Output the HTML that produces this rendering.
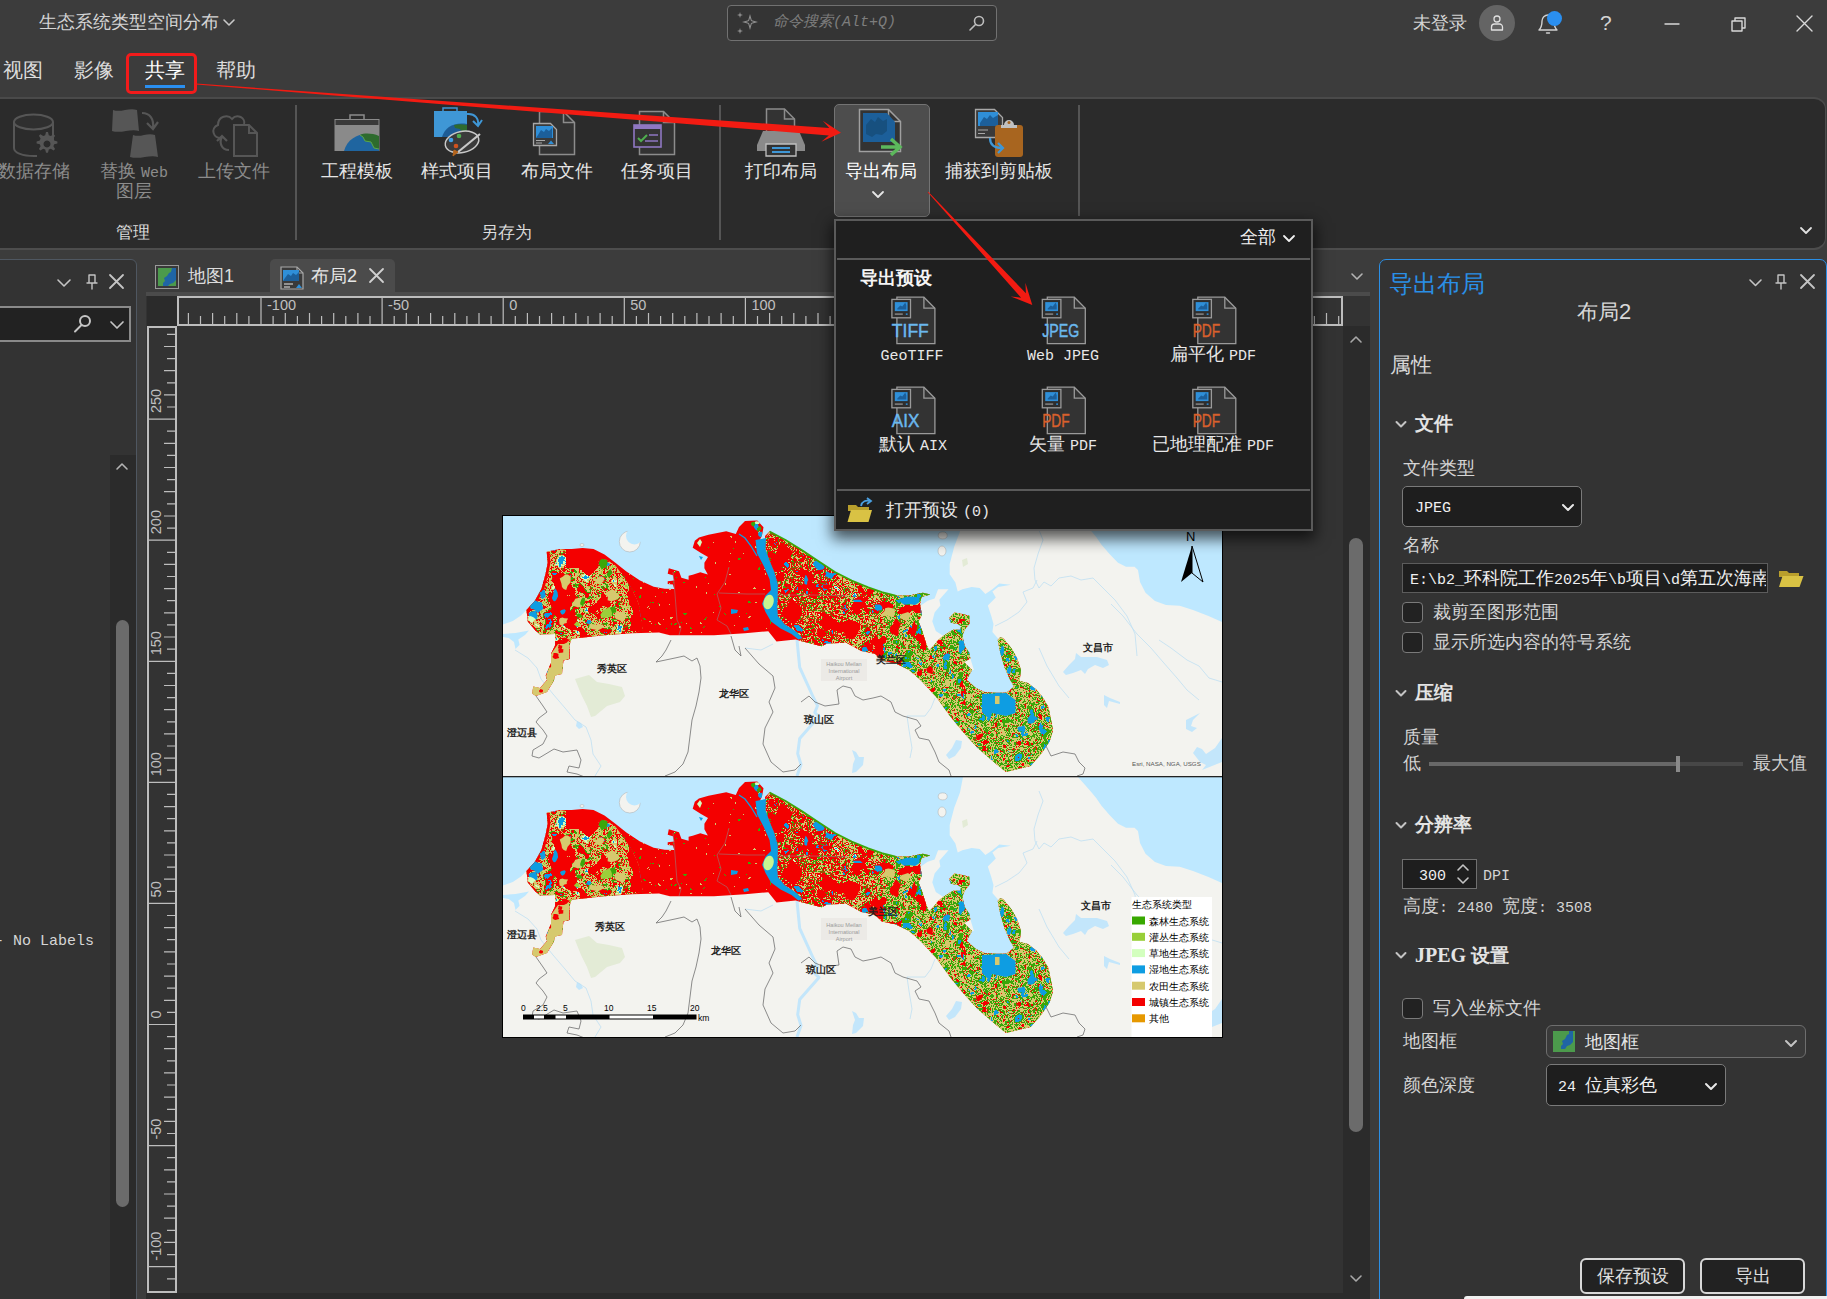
<!DOCTYPE html>
<html><head><meta charset="utf-8"><title>ArcGIS Pro</title>
<style>
*{box-sizing:border-box;margin:0;padding:0}
html,body{width:1827px;height:1299px;overflow:hidden;background:#3c3c3c}
body{position:relative;font-family:"Liberation Sans",sans-serif;color:#e6e6e6;font-size:17.7px;line-height:1}
.a{position:absolute}
.t{position:absolute;white-space:nowrap;line-height:20px;height:20px}
.m{font-family:"Liberation Mono",monospace;font-size:15px}
.c{text-align:center}
.dis{color:#8c8c8c}
.b{font-weight:bold}
svg{position:absolute;overflow:visible}
.ic{fill:none;stroke:#c8c8c8;stroke-width:1.6;stroke-linecap:round;stroke-linejoin:round}
</style></head>
<body>
<!-- ===== title bar ===== -->
<div class="a" style="left:0;top:0;width:1827px;height:97px;background:#3c3c3c"></div>
<div class="t" style="left:39px;top:12px;color:#d4d4d4">生态系统类型空间分布</div>
<svg class="ic" style="left:222px;top:17px" width="14" height="12"><path d="M2 3l5 5 5-5"/></svg>
<!-- search -->
<div class="a" style="left:727px;top:5px;width:270px;height:36px;border:1px solid #717171;border-radius:4px;background:#343434"></div>
<div class="t m" style="left:773px;top:13px;color:#7d7d7d;font-style:italic;font-size:15px">命令搜索(Alt+Q)</div>
<svg style="left:735px;top:10px" width="26" height="26" fill="#8f8f8f"><path d="M15 4l1.8 6.2L23 12l-6.2 1.8L15 20l-1.8-6.2L7 12l6.2-1.8zM15 8l-1 3-3 1 3 1 1 3 1-3 3-1-3-1z" fill-rule="evenodd"/><path d="M5 2l.7 2.3L8 5l-2.3.7L5 8l-.7-2.3L2 5l2.300-.7zM5 18l.7 2.300L8 21l-2.300.7L5 24l-.7-2.300L2 21l2.300-.7z"/></svg>
<svg class="ic" style="left:968px;top:14px;stroke:#bdbdbd" width="18" height="18"><circle cx="11" cy="7" r="4.500"/><path d="M7.500 10.500L2 16"/></svg>
<!-- right controls -->
<div class="t" style="left:1413px;top:13px;color:#d4d4d4">未登录</div>
<div class="a" style="left:1479px;top:5px;width:36px;height:36px;border-radius:18px;background:#646464"></div>
<svg class="ic" style="left:1487px;top:13px;stroke:#e0e0e0;stroke-width:1.3" width="20" height="20"><circle cx="10" cy="6" r="3"/><path d="M4.500 17v-3a3 3 0 0 1 3-3h5a3 3 0 0 1 3 3v3z"/></svg>
<svg class="ic" style="left:1536px;top:9px;stroke:#d0d0d0;stroke-width:1.4" width="28" height="28"><path d="M3 21h18c-2-2-3-4-3-9a6 6 0 0 0-12 0c0 5-1 7-3 9z"/><path d="M10.500 24h3"/></svg>
<div class="a" style="left:1547px;top:11px;width:15px;height:15px;border-radius:8px;background:#2a8ff0"></div>
<div class="t" style="left:1600px;top:13px;color:#d4d4d4;font-size:21px">?</div>
<svg class="ic" style="left:1662px;top:13px;stroke:#d8d8d8;stroke-width:1.400" width="160" height="22"><path d="M3 11h14"/><path d="M70 8h10v10h-10zM73 8v-3h10v10h-3"/><path d="M135 3l15 15M150 3l-15 15"/></svg>
<!-- tabs row -->
<div class="t" style="left:3px;top:60px;font-size:20px;color:#dcdcdc">视图</div>
<div class="t" style="left:74px;top:60px;font-size:20px;color:#dcdcdc">影像</div>
<div class="t" style="left:145px;top:60px;font-size:20px;color:#ffffff">共享</div>
<div class="t" style="left:216px;top:60px;font-size:20px;color:#dcdcdc">帮助</div>
<div class="a" style="left:145px;top:85px;width:40px;height:3px;background:#2a8ff0"></div>
<div class="a" style="left:126px;top:53px;width:71px;height:41px;border:3px solid #f21b1b;border-radius:5px"></div>
<!-- ===== ribbon ===== -->
<div class="a" style="left:-12px;top:97px;width:1838px;height:153px;background:#2b2b2b;border:1px solid #4d4d4d;border-top:2px solid #4a4a4a;border-bottom:2px solid #4d4d4d;border-radius:0 12px 12px 0"></div>
<!-- group separators -->
<div class="a" style="left:295px;top:105px;width:2px;height:135px;background:#555"></div>
<div class="a" style="left:719px;top:105px;width:2px;height:135px;background:#555"></div>
<div class="a" style="left:1078px;top:105px;width:2px;height:111px;background:#555"></div>
<!-- disabled group -->
<svg style="left:0;top:105px" width="290" height="56" fill="none" stroke="#565656" stroke-width="2">
<path d="M14 17v26c0 5 9 8 20 8h3M53 17v18" /><ellipse cx="33.500" cy="17" rx="19.500" ry="7.500" fill="#2f2f2f"/>
<g stroke="none" fill="#565656"><path d="M46 27l2 0 .8 3.200 2 .8 2.800-1.700 1.500 1.500-1.700 2.800.8 2 3.200.8v2l-3.200.8-.8 2 1.700 2.800-1.500 1.500-2.800-1.700-2 .8-.8 3.200h-2l-.8-3.200-2-.8-2.800 1.700-1.500-1.500 1.700-2.800-.8-2-3.200-.8v-2l3.200-.8.8-2-1.700-2.800 1.500-1.500 2.800 1.700 2-.8zM47 35.500a3.500 3.500 0 1 0 .01 0z" fill-rule="evenodd"/></g>
<path d="M113 5c8 3 16-3 24 0l2 21c-8-3-18 3-27 0z" fill="#565656" stroke="none"/>
<path d="M133 30c8 3 14-3 22 0l3 22c-8-3-18 3-28 0z" fill="#565656" stroke="none"/>
<path d="M142 8c8 0 12 6 11 15M147 18l6 6 5-7" stroke-width="2.200"/>
<path d="M222 33c-9 1-12-10-4-13 0-9 10-11 14-6 5-6 14-1 12 5" /><path d="M229 45c-8 0-10-8-7-13M217 36l5-5 5 5" stroke-width="2.200"/>
<path d="M234 20h15l8 8v23h-23z" fill="#2f2f2f"/><path d="M249 20v8h8"/>
</svg>
<div class="t c dis" style="left:-3px;top:161px;width:74px">数据存储</div>
<div class="t c dis" style="left:84px;top:161px;width:100px">替换 <span class="m">Web</span></div>
<div class="t c dis" style="left:84px;top:181px;width:100px">图层</div>
<div class="t c dis" style="left:197px;top:161px;width:74px">上传文件</div>
<div class="t c" style="left:103px;top:222px;width:60px;font-size:16.500px;color:#dcdcdc">管理</div>
<!-- save-as group -->
<svg style="left:330px;top:105px" width="360" height="56">
<!-- briefcase -->
<path d="M20 14v-4h14v4" fill="none" stroke="#8c8c8c" stroke-width="1.500"/><rect x="4.500" y="14" width="45" height="32" fill="#8a8a8a"/><rect x="5.500" y="15" width="43" height="5" fill="#3a3a3a"/>
<path d="M14 46c3-12 14-18 26-17l9 3v14z" fill="#1f65a0"/><path d="M30 30c4-2 12-2 19 1v13l-5-1-3-6-6-1-2-4z" fill="#2e6b2e"/><path d="M30 30l3 2 2 4 6 1 3 6 5 1" fill="none" stroke="#5aa84a" stroke-width="1"/>
<!-- style -->
<path d="M113 6v-3h14v3" fill="none" stroke="#3f97d6" stroke-width="1.500"/><rect x="104" y="6" width="33" height="26" fill="#3f97d6"/><path d="M112 32c3-10 12-15 25-13v13z" fill="#1d5c96"/><path d="M124 20c4-1 9-1 13 0v10l-4-1-3-5-5-1z" fill="#2e6b2e"/>
<path d="M137 9c8-1 12 5 11 11M143 16l5 5 4-6" fill="none" stroke="#3f97d6" stroke-width="2"/>
<ellipse cx="132" cy="37" rx="17" ry="10.500" fill="#3a3a3a" stroke="#c8c8c8" stroke-width="1.500" transform="rotate(-12 132 37)"/>
<circle cx="121" cy="35" r="2.300" fill="#3fa0e8"/><circle cx="129" cy="31" r="2.300" fill="#4fae4f"/><circle cx="126" cy="41" r="2.300" fill="#d0521e"/>
<path d="M150 29l-22 18" stroke="#c8c8c8" stroke-width="2.200"/><path d="M128 47l-5 4 1-6z" fill="#b5651d" stroke="#b5651d"/>
<!-- layout file -->
<path d="M209.500 6.500h24l11 11v32h-35z" fill="#333" stroke="#8c8c8c" stroke-width="1.500"/><path d="M233.500 6.500v11h11" fill="none" stroke="#8c8c8c" stroke-width="1.500"/>
<path d="M203.500 18.500h17l6 6v16h-23z" fill="#3a3a3a" stroke="#a8a8a8" stroke-width="1.300"/><rect x="206" y="21" width="17" height="12" fill="#2f8fd8"/><path d="M208 30l3-5 3 2 2-3 3 2 3-3v10h-16z" fill="#1c5f9a"/><path d="M206 35.500h9M206 38h6" stroke="#a8a8a8" stroke-width="1.200"/><path d="M218 39l3-3.500 3 3.500z" fill="#2f8fd8"/>
<!-- task item -->
<path d="M309.500 6.500h24l11 11v32h-35z" fill="#333" stroke="#8c8c8c" stroke-width="1.500"/><path d="M333.500 6.500v11h11" fill="none" stroke="#8c8c8c" stroke-width="1.500"/>
<rect x="304" y="20" width="27" height="22" fill="#333" stroke="#8f77c2" stroke-width="1.600"/><rect x="304" y="20" width="27" height="4" fill="#8f77c2"/><path d="M308 33l3 3 6-6" fill="none" stroke="#4fae4f" stroke-width="2"/><path d="M319 30h9M315 36h13" stroke="#8f77c2" stroke-width="1.500"/>
</svg>
<div class="t c" style="left:317px;top:161px;width:80px">工程模板</div>
<div class="t c" style="left:417px;top:161px;width:80px">样式项目</div>
<div class="t c" style="left:517px;top:161px;width:80px">布局文件</div>
<div class="t c" style="left:617px;top:161px;width:80px">任务项目</div>
<div class="t c" style="left:466px;top:222px;width:80px;font-size:16.500px;color:#dcdcdc">另存为</div>
<!-- print / export group -->
<div class="a" style="left:834px;top:104px;width:96px;height:113px;background:#4d4d4d;border:1px solid #737373;border-radius:5px"></div>
<svg style="left:750px;top:105px" width="280" height="56">
<!-- printer -->
<path d="M16.500 28v-24h18l10 10v14" fill="#333" stroke="#8c8c8c" stroke-width="1.500"/><path d="M34.500 4v10h10" fill="none" stroke="#8c8c8c" stroke-width="1.500"/>
<path d="M7 40l6-14h36l6 14v6h-48z" fill="#8a8a8a"/><path d="M16 39h30v12h-30z" fill="#333" stroke="#c0c0c0" stroke-width="1.300"/><path d="M22 43h18M22 47h18" stroke="#3f97d6" stroke-width="1.800"/>
<!-- export layout -->
<path d="M109.500 4.500h29l12 12v30h-41z" fill="#333" stroke="#a0a0a0" stroke-width="1.500"/><path d="M138.500 4.500v12h12" fill="none" stroke="#a0a0a0" stroke-width="1.500"/>
<path d="M113 8h24l8 9v20h-32z" fill="#1c5f9a"/><path d="M116 20l5-6 4 3 3-5 5 4 4-2v12l-5 4-6-1-4 3-6-3z" fill="#17507f"/>
<path d="M131 42h17M141 34l9 8-9 8" fill="none" stroke="#5cb85c" stroke-width="3.500"/>
<!-- capture -->
<path d="M225.500 4.500h19l8 8v20h-27z" fill="#3a3a3a" stroke="#a8a8a8" stroke-width="1.300"/><rect x="228" y="7" width="20" height="14" fill="#2f8fd8"/><path d="M230 18l4-6 3 2 3-4 3 3 5-3v11h-18z" fill="#1c5f9a"/><path d="M228 25h10M228 28.500h7" stroke="#a8a8a8" stroke-width="1.200"/>
<rect x="245" y="20" width="28" height="32" rx="3" fill="#a8651f"/><path d="M254 20a5 5 0 0 1 10 0h3v3h-16v-3z" fill="#c0c0c0"/><circle cx="259" cy="17.500" r="1.500" fill="#a8651f"/>
<path d="M240 33c0 8 6 10 12 10M248 38l5 5-5 5" fill="none" stroke="#3f97d6" stroke-width="2.200"/>
</svg>
<div class="t c" style="left:741px;top:161px;width:80px">打印布局</div>
<div class="t c" style="left:841px;top:161px;width:80px;color:#fff">导出布局</div>
<svg class="ic" style="left:870px;top:188px;stroke:#e6e6e6;stroke-width:1.800" width="16" height="14"><path d="M3 4l5 5 5-5"/></svg>
<div class="t c" style="left:939px;top:161px;width:120px">捕获到剪贴板</div>
<svg class="ic" style="left:1798px;top:224px;stroke:#e0e0e0;stroke-width:1.800" width="16" height="14"><path d="M3 4l5 5 5-5"/></svg>

<!-- ===== left panel ===== -->
<div class="a" style="left:-6px;top:259px;width:143px;height:1050px;background:#333333;border:1px solid #4f5761;border-radius:6px"></div>
<svg class="ic" style="left:54px;top:272px;stroke:#c4c4c4" width="80" height="20"><path d="M4 8l6 6 6-6"/><path d="M35 3h6v8h-6zM33 11h10M38 11v6" stroke-width="1.400"/><path d="M56 3l13 13M69 3L56 16" stroke-width="1.800"/></svg>
<div class="a" style="left:-4px;top:306px;width:135px;height:36px;background:#222222;border:2px solid #8a8a8a"></div>
<svg class="ic" style="left:72px;top:312px;stroke:#c4c4c4;stroke-width:2" width="56" height="24"><circle cx="13" cy="9" r="5"/><path d="M9.500 13L3 19.500"/><path d="M39 10l6 6 6-6" stroke-width="1.700"/></svg>
<div class="a" style="left:110px;top:455px;width:26px;height:844px;background:#2b2b2b"></div>
<svg class="ic" style="left:114px;top:460px;stroke:#b4b4b4" width="16" height="14"><path d="M3 9l5-5 5 5"/></svg>
<div class="a" style="left:116px;top:620px;width:13px;height:587px;border-radius:7px;background:#6b6b6b"></div>
<div class="t m" style="left:-5px;top:932px;color:#d6d6d6">- No Labels</div>
<!-- ===== view ===== -->
<div class="a" style="left:146px;top:292px;width:1224px;height:1001px;background:#333333"></div>
<div class="a" style="left:146px;top:292px;width:1224px;height:4px;background:#4b4b4b"></div>
<div class="a" style="left:146px;top:1293px;width:1224px;height:6px;background:#2b2b2b"></div>
<!-- doc tabs -->
<svg style="left:155px;top:265px" width="24" height="24"><rect x="0.500" y="0.500" width="23" height="23" fill="#3a3a3a" stroke="#9a9a9a"/><rect x="3" y="3" width="18" height="18" fill="#4c9a4c"/><path d="M17 3h4v12l-3 3-3 1-2 2H8l0-3 2-2-1-3 3-2 2-3 2-1z" fill="#1f65a5"/></svg>
<div class="t" style="left:188px;top:266px;color:#dcdcdc">地图<span style="font-size:18px">1</span></div>
<div class="a" style="left:270px;top:259px;width:125px;height:33px;background:#4b4b4b;border-radius:5px 5px 0 0"></div>
<svg style="left:280px;top:264px" width="26" height="26"><path d="M1 3h16l6 6v16H1z" fill="#3a3a3a" stroke="#a8a8a8" stroke-width="1.200"/><path d="M17 3v6h6" fill="none" stroke="#a8a8a8" stroke-width="1.200"/><rect x="3" y="6" width="16" height="11" fill="#2f8fd8"/><path d="M5 14l3-4 3 2 2-3 3 2 3-3v9H3z" fill="#1c5f9a"/><path d="M4 20h9M4 23h6" stroke="#b0b0b0" stroke-width="1.300"/><path d="M16 24l3-4 3 4z" fill="#2f8fd8"/></svg>
<div class="t" style="left:311px;top:266px;color:#e6e6e6">布局<span style="font-size:18px">2</span></div>
<svg class="ic" style="left:368px;top:267px;stroke:#d0d0d0;stroke-width:1.800" width="18" height="18"><path d="M2 2l13 13M15 2L2 15"/></svg>
<svg class="ic" style="left:1349px;top:270px;stroke:#b4b4b4" width="16" height="14"><path d="M3 4l5 5 5-5"/></svg>
<div class="a" style="left:147px;top:296px;width:30px;height:30px;background:#2b2b2b"></div><svg style="left:177px;top:296px" width="1166" height="30"><rect x="1" y="1" width="1164" height="28" fill="#333" stroke="#bdbdbd" stroke-width="2"/><g stroke="#bdbdbd" stroke-width="1.200"><path d="M11.4 17V29M23.5 20V29M35.6 17V29M47.7 20V29M59.8 17V29M71.9 20V29M84.0 1V29M96.1 20V29M108.3 17V29M120.4 20V29M132.5 17V29M144.6 20V29M156.7 17V29M168.8 20V29M180.9 17V29M193.0 20V29M205.1 1V29M217.2 20V29M229.3 17V29M241.4 20V29M253.6 17V29M265.7 20V29M277.8 17V29M289.9 20V29M302.0 17V29M314.1 20V29M326.2 1V29M338.3 20V29M350.4 17V29M362.5 20V29M374.6 17V29M386.7 20V29M398.8 17V29M411.0 20V29M423.1 17V29M435.2 20V29M447.3 1V29M459.4 20V29M471.5 17V29M483.6 20V29M495.7 17V29M507.8 20V29M519.9 17V29M532.0 20V29M544.1 17V29M556.3 20V29M568.4 1V29M580.5 20V29M592.6 17V29M604.7 20V29M616.8 17V29M628.9 20V29M641.0 17V29M653.1 20V29M665.2 17V29M677.3 20V29M689.4 1V29M701.5 20V29M713.7 17V29M725.8 20V29M737.9 17V29M750.0 20V29M762.1 17V29M774.2 20V29M786.3 17V29M798.4 20V29M810.5 1V29M822.6 20V29M834.7 17V29M846.8 20V29M859.0 17V29M871.1 20V29M883.2 17V29M895.3 20V29M907.4 17V29M919.5 20V29M931.6 1V29M943.7 20V29M955.8 17V29M967.9 20V29M980.0 17V29M992.1 20V29M1004.2 17V29M1016.4 20V29M1028.5 17V29M1040.6 20V29M1052.7 1V29M1064.8 20V29M1076.9 17V29M1089.0 20V29M1101.1 17V29M1113.2 20V29M1125.3 17V29M1137.4 20V29M1149.5 17V29M1161.7 20V29"/></g><g font-family="Liberation Sans,sans-serif" font-size="14.500" fill="#c0c0c0"><text x="90.0" y="14">-100</text><text x="211.1" y="14">-50</text><text x="332.2" y="14">0</text><text x="453.3" y="14">50</text><text x="574.4" y="14">100</text><text x="695.4" y="14">150</text><text x="816.5" y="14">200</text><text x="937.6" y="14">250</text><text x="1058.7" y="14">300</text></g></svg><svg style="left:147px;top:326px" width="30" height="967"><rect x="1" y="1" width="28" height="965" fill="#333" stroke="#bdbdbd" stroke-width="2"/><g stroke="#bdbdbd" stroke-width="1.200"><path d="M20 952.8H29M1 940.7H29M20 928.6H29M17 916.4H29M20 904.3H29M17 892.2H29M20 880.1H29M17 868.0H29M20 855.9H29M17 843.8H29M20 831.7H29M1 819.6H29M20 807.5H29M17 795.4H29M20 783.3H29M17 771.1H29M20 759.0H29M17 746.9H29M20 734.8H29M17 722.7H29M20 710.6H29M1 698.5H29M20 686.4H29M17 674.3H29M20 662.2H29M17 650.1H29M20 638.0H29M17 625.9H29M20 613.7H29M17 601.6H29M20 589.5H29M1 577.4H29M20 565.3H29M17 553.2H29M20 541.1H29M17 529.0H29M20 516.9H29M17 504.8H29M20 492.7H29M17 480.6H29M20 468.4H29M1 456.3H29M20 444.2H29M17 432.1H29M20 420.0H29M17 407.9H29M20 395.8H29M17 383.7H29M20 371.6H29M17 359.5H29M20 347.4H29M1 335.3H29M20 323.2H29M17 311.0H29M20 298.9H29M17 286.8H29M20 274.7H29M17 262.6H29M20 250.5H29M17 238.4H29M20 226.3H29M1 214.2H29M20 202.1H29M17 190.0H29M20 177.9H29M17 165.7H29M20 153.6H29M17 141.5H29M20 129.4H29M17 117.3H29M20 105.2H29M1 93.1H29M20 81.0H29M17 68.9H29M20 56.8H29M17 44.7H29M20 32.6H29M17 20.5H29M20 8.3H29"/></g><g font-family="Liberation Sans,sans-serif" font-size="14.500" fill="#c0c0c0"><text transform="translate(14,934.7) rotate(-90)">-100</text><text transform="translate(14,813.6) rotate(-90)">-50</text><text transform="translate(14,692.5) rotate(-90)">0</text><text transform="translate(14,571.4) rotate(-90)">50</text><text transform="translate(14,450.3) rotate(-90)">100</text><text transform="translate(14,329.3) rotate(-90)">150</text><text transform="translate(14,208.2) rotate(-90)">200</text><text transform="translate(14,87.1) rotate(-90)">250</text></g></svg>
<!-- view scrollbar -->
<div class="a" style="left:1343px;top:326px;width:27px;height:967px;background:#2b2b2b"></div>
<svg class="ic" style="left:1348px;top:333px;stroke:#a8a8a8" width="16" height="14"><path d="M3 9l5-5 5 5"/></svg>
<svg class="ic" style="left:1348px;top:1272px;stroke:#a8a8a8" width="16" height="14"><path d="M3 4l5 5 5-5"/></svg>
<div class="a" style="left:1349px;top:538px;width:14px;height:594px;border-radius:7px;background:#6b6b6b"></div>
<!-- ===== page / map ===== -->
<div class="a" style="left:502px;top:515px;width:721px;height:523px;background:#000"></div>
<svg style="left:503px;top:516px" width="719" height="521" viewBox="0 0 719 521"><defs><clipPath id="mc"><rect width="719" height="260"/></clipPath><g id="mp" clip-path="url(#mc)"><rect width="719" height="260" fill="#f3f3ef"/><polygon points="575.0,0.0 587.8,14.6 593.0,20.7 598.7,29.0 607.0,38.5 615.0,46.7 623.0,50.8 631.6,50.8 635.0,54.0 637.0,66.0 642.5,76.8 652.0,85.0 663.0,89.0 676.7,89.8 690.0,94.0 705.5,100.0 719.0,106.0 719.0,0.0" fill="#bee8ff"/><polygon points="0.0,0.0 460.0,0.0 457.0,15.5 451.3,30.6 446.7,47.9 446.7,58.3 452.4,66.4 454.7,75.6 459.4,73.3 468.6,71.0 476.7,72.0 482.4,77.9 489.4,73.3 496.3,67.5 507.9,68.7 495.2,71.0 489.4,75.6 492.8,81.4 484.8,89.5 488.2,99.8 490.5,108.0 489.4,116.0 496.3,124.0 497.5,137.7 501.6,151.4 507.0,163.7 511.0,170.5 505.0,177.0 492.0,177.0 481.5,176.5 473.0,172.0 463.7,163.7 469.0,154.0 470.9,154.0 467.4,142.6 466.3,136.8 461.7,129.9 459.4,119.5 461.7,113.7 466.3,107.9 466.3,99.8 459.4,98.1 451.3,96.4 446.1,102.2 447.8,106.8 454.7,107.9 458.2,110.2 457.0,113.7 450.1,113.7 445.5,116.6 439.7,119.5 432.8,114.9 429.3,105.6 431.6,96.4 437.4,89.5 436.3,83.7 445.5,73.3 435.1,73.3 431.6,82.5 424.7,84.8 417.8,89.5 418.9,82.5 427.6,78.5 400.0,100.0 60.0,100.0 30.0,95.0 23.5,94.0 18.0,99.4 9.8,104.9 0.0,108.5" fill="#bee8ff"/><polygon points="0.0,118.0 12.5,117.0 26.0,114.5 22.0,119.0 15.3,123.4 16.6,128.8 12.5,133.0 11.0,126.0 5.7,122.0 0.0,121.0" fill="#bee8ff"/><circle cx="126.800" cy="25.500" r="10.500" fill="#f3f3ef" stroke="#aaa" stroke-width=".5"/><circle cx="131.500" cy="20" r="8.500" fill="#bee8ff"/><ellipse cx="439.700" cy="19.400" rx="4.500" ry="3.500" fill="#f3f3ef" stroke="#aaa" stroke-width=".5"/><ellipse cx="439" cy="35" rx="4" ry="5" fill="#f3f3ef" stroke="#aaa" stroke-width=".5"/><ellipse cx="79" cy="29" rx="2" ry="1.500" fill="#f3f3ef" stroke="#aaa" stroke-width=".5"/><g fill="#c3e6fb"><polygon points="573,137 578,141 594,141 604,144 606,149 600,152 592,149 585,153 582,158 578,154 570,157 563,159 560,156 566,149 572,143"/><polygon points="601,179 607,182 617,186 617,188 606,185 604,192 601,189"/><polygon points="697,197 683,204 683,213 689,216 694,212 688,210 690,204"/><polygon points="719,222 712,232 703,238 699,233 694,231 690,237 697,246 703,249 699,254 709,250 719,246"/><polygon points="453,224 459,225 458,232 452,240 446,243 443,239 449,232"/><polygon points="349,234 353,236 356,241 361,241 360,249 353,256 349,257 350,248 352,243"/><polygon points="74,205 78,207 80,211 76,213 73,210"/></g><g fill="none" stroke="#c3e6fb" stroke-width="3" stroke-linejoin="round"><polyline points="294,124 296.7,151.4 310.4,181.5 314.5,189.700 311.800,196.500 316,200.600 306.300,211.600 296.700,222.500 294.700,237.600 298,248.500 294,260"/></g><g fill="none" stroke="#bfe0f2" stroke-width=".8"><polyline points="12,134 25,142 34,152 38,163 50,178 62,192 72,204 83,211 88,224 90,238 98,250 92,260"/><polyline points="242,132 258,134 270,128"/><polyline points="404,200 406,214 409,232 407,242"/><polyline points="404,200 422,200 428,192 432,182"/><polyline points="536,14 540,24 535,38 531,52 532,64 536,72 541,66 548,70 556,62 568,60 578,64 590,62 600,72 612,84 624,100 632,118 634,140"/><polyline points="608,88 620,100 634,118 648,132 660,146 674,162 684,174 696,184"/><polyline points="492,110 504,104 516,96 524,86 520,76 530,72 534,64"/><polyline points="656,124 668,132 684,144 696,150 706,162 719,166"/><polyline points="536,132 544,150 556,170 566,182"/></g><polygon points="72,163 86,159 94,166 106,168 119,171 122,180 117,186 104,190 92,200 88,201 84,190 78,178" fill="#e3ebd6"/><polygon points="459,44 464,42 465,48 460,51" fill="#e3ebd6"/><g fill="none" stroke="#707070" stroke-width=".8" stroke-linejoin="round"><polyline points="168,124 163,134 159,140 153,146 172,142 181,140 189,145 194,142 197,150 198,162 196,176 193,190 189,204 187,220 185,236 180,248 172,256 162,260"/><polyline points="33,180 40,190 44,196 36,202 33,206 40,214 44,220 40,228 30,234 29,240 36,242 51,233 60,236 74,234 78,244 76,252 66,250 64,256 74,258 84,262"/><polyline points="242,132 256,148 270,160 272,172 266,186 270,196 262,212 260,228 268,246 280,256 292,254 298,248"/><polyline points="298,186 306,180 312,186 322,190 336,188 334,174 340,170 348,172 352,180 360,184 370,182 378,180 388,186 392,196 400,200 414,204 418,210 412,214 416,222 426,224 432,236 436,246 446,254 448,260"/><polyline points="542,228 548,240 560,236 572,238 576,246 582,252 580,258 574,260"/><polyline points="228,120 232,134 238,140 236,130"/></g><defs><filter id="fW" x="0" y="0" width="100%" height="100%" color-interpolation-filters="sRGB"><feTurbulence type="fractalNoise" baseFrequency="0.075" numOctaves="4" seed="4"/><feColorMatrix values="1 0 0 0 0 1 0 0 0 0 1 0 0 0 0 1 0 0 0 0"/><feComponentTransfer><feFuncR type="discrete" tableValues="0.055 0.055 0.055 0.055 0.055 0.055 0.055 0.055 0.055 0.055 0.055 0.055 0.000 0.000 0.000 0.000 0.000 0.227 0.227 0.839 0.839 0.839 0.000 0.608 0.839 0.839 0.000 0.000 0.839 0.839 0.227 0.000 0.000 0.839 0.839 0.839 0.827 0.827 0.055 0.055 0.055 0.055 0.055 0.055 0.055 0.055 0.055 0.055 0.055 0.055"/><feFuncG type="discrete" tableValues="0.616 0.616 0.616 0.616 0.616 0.616 0.616 0.616 0.616 0.616 0.616 0.616 0.000 0.000 0.000 0.000 0.000 0.655 0.655 0.788 0.788 0.788 0.000 0.812 0.788 0.788 0.000 0.000 0.788 0.788 0.655 0.000 0.000 0.788 0.788 0.788 1.000 1.000 0.616 0.616 0.616 0.616 0.616 0.616 0.616 0.616 0.616 0.616 0.616 0.616"/><feFuncB type="discrete" tableValues="0.886 0.886 0.886 0.886 0.886 0.886 0.886 0.886 0.886 0.886 0.886 0.886 0.000 0.000 0.000 0.000 0.000 0.039 0.039 0.431 0.431 0.431 0.000 0.227 0.431 0.431 0.000 0.000 0.431 0.431 0.039 0.000 0.000 0.431 0.431 0.431 0.745 0.745 0.886 0.886 0.886 0.886 0.886 0.886 0.886 0.886 0.886 0.886 0.886 0.886"/><feFuncA type="discrete" tableValues="1 1 1 1 1 1 1 1 1 1 1 1 0 0 0 0 0 1 1 1 1 1 0 1 1 1 0 0 1 1 1 0 0 1 1 1 1 1 1 1 1 1 1 1 1 1 1 1 1 1"/></feComponentTransfer></filter><filter id="fE1" x="0" y="0" width="100%" height="100%" color-interpolation-filters="sRGB"><feTurbulence type="fractalNoise" baseFrequency="0.075" numOctaves="4" seed="6"/><feColorMatrix values="1 0 0 0 0 1 0 0 0 0 1 0 0 0 0 1 0 0 0 0"/><feComponentTransfer><feFuncR type="discrete" tableValues="0.055 0.055 0.055 0.055 0.055 0.055 0.055 0.055 0.055 0.055 0.055 0.055 0.055 0.055 0.957 0.957 0.957 0.957 0.957 0.227 0.839 0.839 0.957 0.957 0.957 0.227 0.839 0.957 0.957 0.957 0.227 0.839 0.839 0.957 0.957 0.957 0.827 0.827 0.055 0.055 0.055 0.055 0.055 0.055 0.055 0.055 0.055 0.055 0.055 0.055"/><feFuncG type="discrete" tableValues="0.616 0.616 0.616 0.616 0.616 0.616 0.616 0.616 0.616 0.616 0.616 0.616 0.616 0.616 0.000 0.000 0.000 0.000 0.000 0.655 0.788 0.788 0.000 0.000 0.000 0.655 0.788 0.000 0.000 0.000 0.655 0.788 0.788 0.000 0.000 0.000 1.000 1.000 0.616 0.616 0.616 0.616 0.616 0.616 0.616 0.616 0.616 0.616 0.616 0.616"/><feFuncB type="discrete" tableValues="0.886 0.886 0.886 0.886 0.886 0.886 0.886 0.886 0.886 0.886 0.886 0.886 0.886 0.886 0.000 0.000 0.000 0.000 0.000 0.039 0.431 0.431 0.000 0.000 0.000 0.039 0.431 0.000 0.000 0.000 0.039 0.431 0.431 0.000 0.000 0.000 0.745 0.745 0.886 0.886 0.886 0.886 0.886 0.886 0.886 0.886 0.886 0.886 0.886 0.886"/><feFuncA type="discrete" tableValues="1 1 1 1 1 1 1 1 1 1 1 1 1 1 1 1 1 1 1 1 1 1 1 1 1 1 1 1 1 1 1 1 1 1 1 1 1 1 1 1 1 1 1 1 1 1 1 1 1 1"/></feComponentTransfer></filter><filter id="fE2" x="0" y="0" width="100%" height="100%" color-interpolation-filters="sRGB"><feTurbulence type="fractalNoise" baseFrequency="0.078" numOctaves="4" seed="6"/><feColorMatrix values="1 0 0 0 0 1 0 0 0 0 1 0 0 0 0 1 0 0 0 0"/><feComponentTransfer><feFuncR type="discrete" tableValues="0.055 0.055 0.055 0.055 0.055 0.055 0.055 0.055 0.055 0.055 0.055 0.055 0.055 0.055 0.957 0.957 0.957 0.957 0.227 0.227 0.839 0.839 0.957 0.957 0.227 0.839 0.839 0.957 0.957 0.227 0.839 0.839 0.839 0.608 0.957 0.957 0.827 0.827 0.055 0.055 0.055 0.055 0.055 0.055 0.055 0.055 0.055 0.055 0.055 0.055"/><feFuncG type="discrete" tableValues="0.616 0.616 0.616 0.616 0.616 0.616 0.616 0.616 0.616 0.616 0.616 0.616 0.616 0.616 0.000 0.000 0.000 0.000 0.655 0.655 0.788 0.788 0.000 0.000 0.655 0.788 0.788 0.000 0.000 0.655 0.788 0.788 0.788 0.812 0.000 0.000 1.000 1.000 0.616 0.616 0.616 0.616 0.616 0.616 0.616 0.616 0.616 0.616 0.616 0.616"/><feFuncB type="discrete" tableValues="0.886 0.886 0.886 0.886 0.886 0.886 0.886 0.886 0.886 0.886 0.886 0.886 0.886 0.886 0.000 0.000 0.000 0.000 0.039 0.039 0.431 0.431 0.000 0.000 0.039 0.431 0.431 0.000 0.000 0.039 0.431 0.431 0.431 0.227 0.000 0.000 0.745 0.745 0.886 0.886 0.886 0.886 0.886 0.886 0.886 0.886 0.886 0.886 0.886 0.886"/><feFuncA type="discrete" tableValues="1 1 1 1 1 1 1 1 1 1 1 1 1 1 1 1 1 1 1 1 1 1 1 1 1 1 1 1 1 1 1 1 1 1 1 1 1 1 1 1 1 1 1 1 1 1 1 1 1 1"/></feComponentTransfer></filter><filter id="fS" x="0" y="0" width="100%" height="100%" color-interpolation-filters="sRGB"><feTurbulence type="fractalNoise" baseFrequency="0.08" numOctaves="4" seed="9"/><feColorMatrix values="1 0 0 0 0 1 0 0 0 0 1 0 0 0 0 1 0 0 0 0"/><feComponentTransfer><feFuncR type="discrete" tableValues="0.055 0.055 0.055 0.055 0.055 0.055 0.055 0.055 0.055 0.055 0.055 0.055 0.055 0.227 0.227 0.227 0.227 0.227 0.839 0.839 0.839 0.957 0.227 0.227 0.839 0.839 0.227 0.227 0.839 0.839 0.839 0.957 0.227 0.227 0.227 0.839 0.839 0.055 0.055 0.055 0.055 0.055 0.055 0.055 0.055 0.055 0.055 0.055 0.055 0.055"/><feFuncG type="discrete" tableValues="0.616 0.616 0.616 0.616 0.616 0.616 0.616 0.616 0.616 0.616 0.616 0.616 0.616 0.655 0.655 0.655 0.655 0.655 0.788 0.788 0.788 0.000 0.655 0.655 0.788 0.788 0.655 0.655 0.788 0.788 0.788 0.000 0.655 0.655 0.655 0.788 0.788 0.616 0.616 0.616 0.616 0.616 0.616 0.616 0.616 0.616 0.616 0.616 0.616 0.616"/><feFuncB type="discrete" tableValues="0.886 0.886 0.886 0.886 0.886 0.886 0.886 0.886 0.886 0.886 0.886 0.886 0.886 0.039 0.039 0.039 0.039 0.039 0.431 0.431 0.431 0.000 0.039 0.039 0.431 0.431 0.039 0.039 0.431 0.431 0.431 0.000 0.039 0.039 0.039 0.431 0.431 0.886 0.886 0.886 0.886 0.886 0.886 0.886 0.886 0.886 0.886 0.886 0.886 0.886"/><feFuncA type="discrete" tableValues="1 1 1 1 1 1 1 1 1 1 1 1 1 1 1 1 1 1 1 1 1 1 1 1 1 1 1 1 1 1 1 1 1 1 1 1 1 1 1 1 1 1 1 1 1 1 1 1 1 1"/></feComponentTransfer></filter><filter id="fR" x="0" y="0" width="100%" height="100%" color-interpolation-filters="sRGB"><feTurbulence type="fractalNoise" baseFrequency="0.04" numOctaves="4" seed="12"/><feColorMatrix values="1 0 0 0 0 1 0 0 0 0 1 0 0 0 0 1 0 0 0 0"/><feComponentTransfer><feFuncR type="discrete" tableValues="0.957 0.957 0.957 0.957 0.957 0.957 0.957 0.957 0.957 0.957 0.957 0.957 0.957 0.957 0.957 0.957 0.957 0.957 0.957 0.957 0.957 0.957 0.000 0.000 0.000 0.000 0.000 0.000 0.000 0.000 0.000 0.000 0.000 0.000 0.000 0.000 0.000 0.000 0.000 0.000 0.000 0.000 0.000 0.000 0.000 0.000 0.000 0.000 0.000 0.000"/><feFuncG type="discrete" tableValues="0.000 0.000 0.000 0.000 0.000 0.000 0.000 0.000 0.000 0.000 0.000 0.000 0.000 0.000 0.000 0.000 0.000 0.000 0.000 0.000 0.000 0.000 0.000 0.000 0.000 0.000 0.000 0.000 0.000 0.000 0.000 0.000 0.000 0.000 0.000 0.000 0.000 0.000 0.000 0.000 0.000 0.000 0.000 0.000 0.000 0.000 0.000 0.000 0.000 0.000"/><feFuncB type="discrete" tableValues="0.000 0.000 0.000 0.000 0.000 0.000 0.000 0.000 0.000 0.000 0.000 0.000 0.000 0.000 0.000 0.000 0.000 0.000 0.000 0.000 0.000 0.000 0.000 0.000 0.000 0.000 0.000 0.000 0.000 0.000 0.000 0.000 0.000 0.000 0.000 0.000 0.000 0.000 0.000 0.000 0.000 0.000 0.000 0.000 0.000 0.000 0.000 0.000 0.000 0.000"/><feFuncA type="discrete" tableValues="1 1 1 1 1 1 1 1 1 1 1 1 1 1 1 1 1 1 1 1 1 1 0 0 0 0 0 0 0 0 0 0 0 0 0 0 0 0 0 0 0 0 0 0 0 0 0 0 0 0"/></feComponentTransfer></filter><filter id="fR2" x="0" y="0" width="100%" height="100%" color-interpolation-filters="sRGB"><feTurbulence type="fractalNoise" baseFrequency="0.06" numOctaves="4" seed="21"/><feColorMatrix values="1 0 0 0 0 1 0 0 0 0 1 0 0 0 0 1 0 0 0 0"/><feComponentTransfer><feFuncR type="discrete" tableValues="0.957 0.957 0.957 0.957 0.957 0.957 0.957 0.957 0.957 0.957 0.957 0.957 0.957 0.957 0.957 0.957 0.957 0.957 0.957 0.000 0.000 0.000 0.000 0.000 0.000 0.000 0.000 0.000 0.000 0.000 0.000 0.000 0.000 0.000 0.000 0.000 0.000 0.000 0.000 0.000 0.000 0.000 0.000 0.000 0.000 0.000 0.000 0.000 0.000 0.000"/><feFuncG type="discrete" tableValues="0.000 0.000 0.000 0.000 0.000 0.000 0.000 0.000 0.000 0.000 0.000 0.000 0.000 0.000 0.000 0.000 0.000 0.000 0.000 0.000 0.000 0.000 0.000 0.000 0.000 0.000 0.000 0.000 0.000 0.000 0.000 0.000 0.000 0.000 0.000 0.000 0.000 0.000 0.000 0.000 0.000 0.000 0.000 0.000 0.000 0.000 0.000 0.000 0.000 0.000"/><feFuncB type="discrete" tableValues="0.000 0.000 0.000 0.000 0.000 0.000 0.000 0.000 0.000 0.000 0.000 0.000 0.000 0.000 0.000 0.000 0.000 0.000 0.000 0.000 0.000 0.000 0.000 0.000 0.000 0.000 0.000 0.000 0.000 0.000 0.000 0.000 0.000 0.000 0.000 0.000 0.000 0.000 0.000 0.000 0.000 0.000 0.000 0.000 0.000 0.000 0.000 0.000 0.000 0.000"/><feFuncA type="discrete" tableValues="1 1 1 1 1 1 1 1 1 1 1 1 1 1 1 1 1 1 1 0 0 0 0 0 0 0 0 0 0 0 0 0 0 0 0 0 0 0 0 0 0 0 0 0 0 0 0 0 0 0"/></feComponentTransfer></filter><filter id="fR3" x="0" y="0" width="100%" height="100%" color-interpolation-filters="sRGB"><feTurbulence type="fractalNoise" baseFrequency="0.09" numOctaves="3" seed="30"/><feColorMatrix values="1 0 0 0 0 1 0 0 0 0 1 0 0 0 0 1 0 0 0 0"/><feComponentTransfer><feFuncR type="discrete" tableValues="0.957 0.957 0.957 0.957 0.957 0.957 0.957 0.957 0.957 0.957 0.957 0.957 0.957 0.957 0.000 0.000 0.000 0.000 0.000 0.000 0.000 0.000 0.000 0.000 0.000 0.000 0.000 0.000 0.000 0.000 0.000 0.000 0.000 0.000 0.000 0.000 0.000 0.000 0.055 0.055 0.055 0.055 0.055 0.055 0.055 0.055 0.055 0.055 0.055 0.055"/><feFuncG type="discrete" tableValues="0.000 0.000 0.000 0.000 0.000 0.000 0.000 0.000 0.000 0.000 0.000 0.000 0.000 0.000 0.000 0.000 0.000 0.000 0.000 0.000 0.000 0.000 0.000 0.000 0.000 0.000 0.000 0.000 0.000 0.000 0.000 0.000 0.000 0.000 0.000 0.000 0.000 0.000 0.616 0.616 0.616 0.616 0.616 0.616 0.616 0.616 0.616 0.616 0.616 0.616"/><feFuncB type="discrete" tableValues="0.000 0.000 0.000 0.000 0.000 0.000 0.000 0.000 0.000 0.000 0.000 0.000 0.000 0.000 0.000 0.000 0.000 0.000 0.000 0.000 0.000 0.000 0.000 0.000 0.000 0.000 0.000 0.000 0.000 0.000 0.000 0.000 0.000 0.000 0.000 0.000 0.000 0.000 0.886 0.886 0.886 0.886 0.886 0.886 0.886 0.886 0.886 0.886 0.886 0.886"/><feFuncA type="discrete" tableValues="1 1 1 1 1 1 1 1 1 1 1 1 1 1 0 0 0 0 0 0 0 0 0 0 0 0 0 0 0 0 0 0 0 0 0 0 0 0 1 1 1 1 1 1 1 1 1 1 1 1"/></feComponentTransfer></filter><filter id="fC2" x="0" y="0" width="100%" height="100%" color-interpolation-filters="sRGB"><feTurbulence type="fractalNoise" baseFrequency="0.2" numOctaves="3" seed="14"/><feColorMatrix values="1 0 0 0 0 1 0 0 0 0 1 0 0 0 0 1 0 0 0 0"/><feComponentTransfer><feFuncR type="discrete" tableValues="0.839 0.839 0.839 0.839 0.839 0.839 0.839 0.839 0.839 0.839 0.839 0.839 0.839 0.000 0.000 0.000 0.000 0.000 0.000 0.000 0.000 0.000 0.000 0.000 0.000 0.000 0.000 0.000 0.000 0.000 0.000 0.000 0.000 0.000 0.000 0.000 0.000 0.000 0.227 0.227 0.227 0.227 0.227 0.227 0.227 0.227 0.227 0.227 0.227 0.227"/><feFuncG type="discrete" tableValues="0.788 0.788 0.788 0.788 0.788 0.788 0.788 0.788 0.788 0.788 0.788 0.788 0.788 0.000 0.000 0.000 0.000 0.000 0.000 0.000 0.000 0.000 0.000 0.000 0.000 0.000 0.000 0.000 0.000 0.000 0.000 0.000 0.000 0.000 0.000 0.000 0.000 0.000 0.655 0.655 0.655 0.655 0.655 0.655 0.655 0.655 0.655 0.655 0.655 0.655"/><feFuncB type="discrete" tableValues="0.431 0.431 0.431 0.431 0.431 0.431 0.431 0.431 0.431 0.431 0.431 0.431 0.431 0.000 0.000 0.000 0.000 0.000 0.000 0.000 0.000 0.000 0.000 0.000 0.000 0.000 0.000 0.000 0.000 0.000 0.000 0.000 0.000 0.000 0.000 0.000 0.000 0.000 0.039 0.039 0.039 0.039 0.039 0.039 0.039 0.039 0.039 0.039 0.039 0.039"/><feFuncA type="discrete" tableValues="1 1 1 1 1 1 1 1 1 1 1 1 1 0 0 0 0 0 0 0 0 0 0 0 0 0 0 0 0 0 0 0 0 0 0 0 0 0 1 1 1 1 1 1 1 1 1 1 1 1"/></feComponentTransfer></filter><filter id="fC" x="0" y="0" width="100%" height="100%" color-interpolation-filters="sRGB"><feTurbulence type="fractalNoise" baseFrequency="0.2" numOctaves="2" seed="2"/><feColorMatrix values="1 0 0 0 0 1 0 0 0 0 1 0 0 0 0 1 0 0 0 0"/><feComponentTransfer><feFuncR type="discrete" tableValues="0.839 0.839 0.839 0.839 0.839 0.839 0.839 0.839 0.839 0.839 0.839 0.000 0.000 0.000 0.000 0.000 0.000 0.000 0.000 0.000 0.000 0.000 0.000 0.000 0.000 0.000 0.000 0.000 0.000 0.000 0.000 0.000 0.000 0.000 0.000 0.000 0.000 0.000 0.000 0.227 0.227 0.227 0.227 0.227 0.227 0.227 0.227 0.227 0.227 0.227"/><feFuncG type="discrete" tableValues="0.788 0.788 0.788 0.788 0.788 0.788 0.788 0.788 0.788 0.788 0.788 0.000 0.000 0.000 0.000 0.000 0.000 0.000 0.000 0.000 0.000 0.000 0.000 0.000 0.000 0.000 0.000 0.000 0.000 0.000 0.000 0.000 0.000 0.000 0.000 0.000 0.000 0.000 0.000 0.655 0.655 0.655 0.655 0.655 0.655 0.655 0.655 0.655 0.655 0.655"/><feFuncB type="discrete" tableValues="0.431 0.431 0.431 0.431 0.431 0.431 0.431 0.431 0.431 0.431 0.431 0.000 0.000 0.000 0.000 0.000 0.000 0.000 0.000 0.000 0.000 0.000 0.000 0.000 0.000 0.000 0.000 0.000 0.000 0.000 0.000 0.000 0.000 0.000 0.000 0.000 0.000 0.000 0.000 0.039 0.039 0.039 0.039 0.039 0.039 0.039 0.039 0.039 0.039 0.039"/><feFuncA type="discrete" tableValues="1 1 1 1 1 1 1 1 1 1 1 0 0 0 0 0 0 0 0 0 0 0 0 0 0 0 0 0 0 0 0 0 0 0 0 0 0 0 0 1 1 1 1 1 1 1 1 1 1 1"/></feComponentTransfer></filter><clipPath id="ecoclip"><polygon points="23.5,94.0 31.7,85.0 38.5,72.7 42.6,57.7 44.7,46.7 43.7,35.8 56.3,33.0 68.6,33.0 79.6,32.0 90.5,33.0 101.5,38.5 112.4,46.7 123.4,55.6 137.0,64.5 150.7,70.7 161.7,72.7 171.3,73.0 169.9,68.6 164.7,68.0 164.7,65.2 171.3,64.5 169.9,59.3 164.7,57.7 165.8,52.2 176.0,55.2 178.4,61.8 185.6,63.8 185.6,59.7 189.7,58.8 197.3,56.3 204.8,58.4 201.4,52.2 201.4,46.7 205.0,41.0 198.0,37.0 189.7,31.7 191.8,24.8 195.9,21.4 205.5,18.7 223.2,15.3 232.8,18.0 236.0,11.0 242.0,5.0 254.3,4.6 260.5,11.2 259.0,19.4 255.7,26.2 262.5,26.2 262.0,20.0 266.6,15.5 283.0,24.2 299.5,34.4 315.9,45.4 332.3,56.3 348.7,64.5 365.2,71.4 378.8,76.2 392.5,79.6 406.2,79.6 419.9,76.8 427.4,78.5 418.5,81.0 417.0,87.8 417.2,89.5 418.9,98.7 415.5,105.6 418.9,113.7 422.4,125.2 425.9,134.5 430.5,129.9 435.1,124.1 440.9,119.5 445.5,116.6 450.1,113.7 457.0,113.7 458.2,110.2 454.7,107.9 447.8,106.8 446.1,102.2 451.3,96.4 459.4,98.1 466.3,99.8 466.3,107.9 461.7,113.7 459.4,119.5 461.7,129.9 466.3,136.8 467.4,142.6 461.0,146.0 469.0,154.0 463.7,163.7 473.0,172.0 481.5,176.0 492.0,176.7 503.0,176.7 507.0,174.0 511.0,170.5 507.0,163.7 501.6,151.4 497.5,137.7 494.7,124.0 497.0,121.5 500.0,122.0 501.6,124.0 508.4,132.2 513.9,141.8 518.0,154.0 516.6,165.0 524.8,167.0 533.0,173.3 539.9,181.5 545.4,191.0 548.0,203.4 550.0,214.3 546.7,225.3 538.5,237.6 527.6,249.9 503.0,256.0 492.0,247.0 474.6,232.0 460.9,217.0 447.3,200.6 433.6,181.5 418.5,165.0 406.2,154.0 392.5,147.3 378.8,144.5 372.0,137.7 358.3,135.0 343.3,126.7 324.0,127.4 318.6,130.2 296.7,124.7 292.6,123.4 273.5,125.4 265.3,115.2 242.0,117.2 211.0,119.3 167.0,119.3 156.0,116.5 128.8,117.2 101.5,119.3 68.6,122.7 66.6,128.8 66.6,143.0 60.4,144.5 59.0,158.0 52.0,159.6 50.8,165.0 44.0,176.0 33.0,180.0 29.0,177.4 30.3,170.5 37.0,172.0 44.0,163.7 42.6,159.6 48.0,147.0 48.0,137.7 52.0,129.5 52.2,117.9 37.0,118.6 33.0,115.2 24.8,105.6"/></clipPath><clipPath id="eastclip"><polygon points="266.6,15.5 283.0,24.2 299.5,34.4 315.9,45.4 332.3,56.3 348.7,64.5 365.2,71.4 378.8,76.2 392.5,79.6 406.2,79.6 419.9,76.8 427.4,78.5 418.5,81.0 417.0,87.8 417.2,89.5 418.9,98.7 415.5,105.6 418.9,113.7 422.4,125.2 425.9,134.5 430.5,129.9 435.1,124.1 440.9,119.5 445.5,116.6 450.1,113.7 457.0,113.7 458.2,110.2 454.7,107.9 447.8,106.8 446.1,102.2 451.3,96.4 459.4,98.1 466.3,99.8 466.3,107.9 461.7,113.7 459.4,119.5 461.7,129.9 466.3,136.8 467.4,142.6 461.0,146.0 469.0,154.0 463.7,163.7 473.0,172.0 481.5,176.0 492.0,176.7 503.0,176.7 507.0,174.0 511.0,170.5 507.0,163.7 501.6,151.4 497.5,137.7 494.7,124.0 497.0,121.5 500.0,122.0 501.6,124.0 508.4,132.2 513.9,141.8 518.0,154.0 516.6,165.0 524.8,167.0 533.0,173.3 539.9,181.5 545.4,191.0 548.0,203.4 550.0,214.3 546.7,225.3 538.5,237.6 527.6,249.9 503.0,256.0 492.0,247.0 474.6,232.0 460.9,217.0 447.3,200.6 433.6,181.5 418.5,165.0 406.2,154.0 392.5,147.3 378.8,144.5 372.0,137.7 358.3,135.0 343.3,126.7 324.0,127.4 318.6,130.2 296.7,124.7 299.5,122.0 292.6,115.2 281.7,108.3 274.8,100.1 274.2,90.5 274.8,79.6 274.8,68.6 271.4,56.3 266.3,44.0 262.5,33.0 263.0,22.0"/></clipPath><clipPath id="wclip"><polygon points="23.5,94.0 31.7,85.0 38.5,72.7 42.6,57.7 44.7,46.7 43.7,35.8 56.3,33.0 63.0,34.0 63.0,52.0 95.0,52.0 96.0,42.0 104.0,44.0 112.4,49.5 120.0,60.0 128.8,72.7 135.7,87.8 139.8,115.0 128.8,117.2 101.5,119.3 68.6,122.7 66.6,128.8 66.6,143.0 60.4,144.5 59.0,158.0 52.0,159.6 50.8,165.0 44.0,176.0 33.0,180.0 29.0,177.4 30.3,170.5 37.0,172.0 44.0,163.7 42.6,159.6 48.0,147.0 48.0,137.7 52.0,129.5 52.2,117.9 37.0,118.6 33.0,115.2 24.8,105.6"/></clipPath></defs><polygon points="23.5,94.0 31.7,85.0 38.5,72.7 42.6,57.7 44.7,46.7 43.7,35.8 56.3,33.0 68.6,33.0 79.6,32.0 90.5,33.0 101.5,38.5 112.4,46.7 123.4,55.6 137.0,64.5 150.7,70.7 161.7,72.7 171.3,73.0 169.9,68.6 164.7,68.0 164.7,65.2 171.3,64.5 169.9,59.3 164.7,57.7 165.8,52.2 176.0,55.2 178.4,61.8 185.6,63.8 185.6,59.7 189.7,58.8 197.3,56.3 204.8,58.4 201.4,52.2 201.4,46.7 205.0,41.0 198.0,37.0 189.7,31.7 191.8,24.8 195.9,21.4 205.5,18.7 223.2,15.3 232.8,18.0 236.0,11.0 242.0,5.0 254.3,4.6 260.5,11.2 259.0,19.4 255.7,26.2 262.5,26.2 262.0,20.0 266.6,15.5 283.0,24.2 299.5,34.4 315.9,45.4 332.3,56.3 348.7,64.5 365.2,71.4 378.8,76.2 392.5,79.6 406.2,79.6 419.9,76.8 427.4,78.5 418.5,81.0 417.0,87.8 417.2,89.5 418.9,98.7 415.5,105.6 418.9,113.7 422.4,125.2 425.9,134.5 430.5,129.9 435.1,124.1 440.9,119.5 445.5,116.6 450.1,113.7 457.0,113.7 458.2,110.2 454.7,107.9 447.8,106.8 446.1,102.2 451.3,96.4 459.4,98.1 466.3,99.8 466.3,107.9 461.7,113.7 459.4,119.5 461.7,129.9 466.3,136.8 467.4,142.6 461.0,146.0 469.0,154.0 463.7,163.7 473.0,172.0 481.5,176.0 492.0,176.7 503.0,176.7 507.0,174.0 511.0,170.5 507.0,163.7 501.6,151.4 497.5,137.7 494.7,124.0 497.0,121.5 500.0,122.0 501.6,124.0 508.4,132.2 513.9,141.8 518.0,154.0 516.6,165.0 524.8,167.0 533.0,173.3 539.9,181.5 545.4,191.0 548.0,203.4 550.0,214.3 546.7,225.3 538.5,237.6 527.6,249.9 503.0,256.0 492.0,247.0 474.6,232.0 460.9,217.0 447.3,200.6 433.6,181.5 418.5,165.0 406.2,154.0 392.5,147.3 378.8,144.5 372.0,137.7 358.3,135.0 343.3,126.7 324.0,127.4 318.6,130.2 296.7,124.7 292.6,123.4 273.5,125.4 265.3,115.2 242.0,117.2 211.0,119.3 167.0,119.3 156.0,116.5 128.8,117.2 101.5,119.3 68.6,122.7 66.6,128.8 66.6,143.0 60.4,144.5 59.0,158.0 52.0,159.6 50.8,165.0 44.0,176.0 33.0,180.0 29.0,177.4 30.3,170.5 37.0,172.0 44.0,163.7 42.6,159.6 48.0,147.0 48.0,137.7 52.0,129.5 52.2,117.9 37.0,118.6 33.0,115.2 24.8,105.6" fill="#f40000"/><g clip-path="url(#ecoclip)"><rect x="128" y="4" width="140" height="120" filter="url(#fC)"/><path d="M112 46L128 58 140 68 172 76 170 120 134 120 136 88 128 72z" filter="url(#fC2)"/></g><g clip-path="url(#wclip)"><rect x="20" y="30" width="125" height="155" filter="url(#fW)"/><rect x="20" y="30" width="125" height="155" filter="url(#fR)"/><polyline points="24.5,100 24.5,94 32.500,85 39.500,72.700 43.600,57.700 45.700,46.700 44.700,36" fill="none" stroke="#f40000" stroke-width="3.500"/><path d="M55 128L66 128 66 143 60 145 59 158 52 160 50 166 44 176 33 180 29 177 30 170 37 172 44 164 43 160 48 147 48 138z" fill="#d6c96e"/><path d="M40.5 92.8L37.8 94.4L35.0 96.9L31.6 93.7L27.3 92.2L26.9 88.7L29.4 86.7L30.9 83.8L34.9 85.8L39.0 86.4L39.4 89.7zM34.3 99.0L34.6 101.1L33.3 103.4L30.5 102.0L28.6 101.5L26.3 100.2L25.4 97.6L27.9 95.8L30.4 95.3L33.4 94.3L33.7 97.5zM55.1 80.3L53.5 83.4L52.3 85.0L51.2 85.2L50.1 84.5L48.9 82.1L50.3 78.2L50.8 74.3L52.4 72.5L53.5 74.3L54.5 76.3zM62.2 96.0L61.8 97.0L61.0 97.8L59.5 98.8L58.1 97.8L57.5 96.6L57.0 95.3L58.1 94.2L59.6 93.8L61.5 93.3L62.8 94.5zM42.5 78.0L42.6 80.3L41.3 81.7L39.5 82.9L37.7 81.5L37.5 79.0L36.2 76.5L38.5 75.7L39.6 74.2L41.5 73.8L42.0 76.3zM88.5 106.0L87.5 106.8L87.2 108.0L85.6 108.3L84.3 107.6L83.0 106.7L83.9 105.5L84.2 104.3L85.6 103.9L87.1 104.1L88.0 104.9zM107.0 48.0L106.7 49.4L105.0 49.8L103.6 50.2L102.8 49.1L101.3 48.6L101.4 47.4L101.8 46.0L103.6 45.6L104.9 46.4L105.9 47.0z" fill="#0e9de2"/><path d="M67.5 66.6L64.6 69.7L63.2 74.1L60.7 72.9L59.0 70.9L58.4 67.5L56.7 62.5L60.0 60.6L62.2 58.5L64.7 58.6L67.8 60.5zM80.4 86.0L80.9 88.4L78.6 90.2L74.9 91.5L71.3 90.1L68.9 87.6L71.1 84.9L72.3 82.8L75.2 81.9L79.1 80.9L82.5 82.9zM100.9 64.0L100.3 65.7L98.7 67.0L96.4 67.3L93.8 67.0L91.9 65.2L92.9 63.0L94.8 61.9L96.3 60.2L98.9 60.7L101.4 61.7zM116.7 80.0L114.7 83.0L111.5 84.6L108.1 85.3L104.6 84.2L104.9 81.0L101.8 78.2L104.4 75.5L107.9 73.9L112.0 74.6L113.7 77.5zM123.5 100.0L121.4 102.4L120.2 105.9L116.3 104.3L113.7 103.3L111.5 101.4L111.7 98.7L112.9 95.9L116.3 95.8L119.0 96.3L121.6 97.5zM63.7 105.0L63.8 107.0L61.4 107.5L59.1 109.9L56.5 108.2L56.3 105.9L56.0 104.1L57.0 102.3L59.4 101.4L61.6 102.2L65.1 102.4zM101.2 111.0L97.8 112.9L94.9 114.2L91.3 113.5L88.6 113.0L86.0 111.9L86.3 110.2L86.5 107.8L91.2 108.3L94.0 108.8L99.6 108.6z" fill="#d6c96e"/><path d="M81.9 86.6L80.6 88.4L79.4 90.7L78.8 89.2L77.6 89.3L77.1 87.0L78.3 83.6L79.8 81.5L81.0 81.9L82.0 82.3L81.9 84.4zM103.6 50.0L101.3 51.9L98.9 53.5L97.5 51.7L96.9 49.8L95.7 47.6L97.0 44.3L99.8 42.6L102.3 42.5L104.2 44.0L104.5 46.9zM107.8 59.0L106.8 60.9L105.2 61.3L104.5 60.3L104.0 59.3L103.7 57.9L104.7 56.2L106.0 54.1L108.0 53.3L108.6 55.4L109.7 56.9zM79.9 100.0L79.3 101.4L77.1 101.7L75.6 101.6L74.4 101.2L73.7 100.5L73.7 99.5L73.9 98.4L75.5 97.5L77.5 97.8L78.5 98.9zM113.3 94.0L113.0 96.6L110.9 96.7L109.5 98.4L107.5 97.8L106.6 95.3L106.7 92.7L108.1 91.0L109.7 90.9L111.5 89.7L112.3 92.1z" fill="#3aa70a"/><path d="M109.0 97.0L108.5 100.5L104.9 101.2L102.3 101.6L98.8 101.9L97.5 98.6L99.2 95.9L100.5 94.1L102.4 93.2L105.6 91.3L108.0 93.8zM76.3 108.0L77.1 109.3L75.6 110.4L73.5 110.2L72.2 109.4L71.0 108.6L71.8 107.6L72.6 107.0L73.4 105.4L75.4 106.0L76.6 106.9z" fill="#9bcf3a"/><path d="M32.5 103.0L30.8 104.6L29.8 106.4L27.4 106.6L26.1 104.8L25.2 103.7L25.1 102.3L26.1 101.1L27.5 99.9L29.2 100.7L30.8 101.5z" fill="#d3ffbe"/><path d="M55.3 140.0L56.2 142.0L54.1 142.5L52.6 142.9L50.9 142.4L49.4 141.1L50.3 139.2L50.5 137.1L52.6 137.0L54.3 137.2L55.6 138.4zM60.1 135.0L60.4 136.3L59.0 136.8L57.7 136.7L55.7 137.3L55.7 135.6L55.2 134.3L55.8 132.8L57.6 132.4L59.1 133.0L60.6 133.6zM48.1 150.0L48.0 151.3L46.6 151.4L45.7 152.1L44.9 151.3L44.4 150.5L43.7 149.3L44.7 148.5L45.7 147.9L47.0 147.9L48.1 148.6zM39.9 175.0L39.8 175.9L38.8 176.4L37.7 176.5L36.5 176.3L36.1 175.4L36.0 174.6L36.7 173.9L37.6 173.1L38.9 173.5L40.1 174.0zM67.1 124.0L64.8 125.4L63.7 126.8L61.3 127.8L58.8 126.8L59.1 124.6L59.1 123.4L59.5 121.8L61.6 121.8L63.4 121.7L64.4 122.8zM59.2 131.0L59.0 132.3L58.0 133.3L56.8 132.5L55.5 132.7L54.9 131.6L55.5 130.6L55.4 129.1L56.6 128.4L57.7 129.5L59.2 129.6z" fill="#f40000"/></g><g clip-path="url(#eastclip)"><rect x="258" y="10" width="300" height="250" fill="#d6c96e"/><rect x="258" y="10" width="82" height="125" filter="url(#fE1)"/><rect x="340" y="50" width="80" height="110" filter="url(#fE2)"/><path d="M420 60L560 60 560 260 380 260 380 160 420 160z" filter="url(#fS)"/><rect x="258" y="10" width="165" height="150" filter="url(#fR2)"/><path d="M423 60L560 60 560 260 380 260 380 160 423 160z" filter="url(#fR3)"/><path d="M356.2 113.9L354.2 118.4L350.2 123.6L343.2 122.2L340.9 116.2L337.5 112.6L338.0 107.6L342.5 104.9L347.3 104.7L352.0 105.6L357.5 108.5zM395.4 113.3L395.9 117.9L393.3 120.2L391.0 118.4L388.6 118.1L386.6 114.9L387.4 110.3L390.1 108.4L392.1 102.6L395.3 104.7L398.0 107.9zM370.4 131.0L370.2 132.6L368.3 133.2L366.2 135.1L364.5 133.3L363.7 131.8L362.9 130.1L363.3 127.7L366.2 126.8L368.6 128.3L369.9 129.5zM299.4 98.1L295.3 104.0L291.1 108.7L286.3 104.9L283.2 102.5L278.0 99.5L280.1 93.2L284.3 90.6L287.8 83.0L293.1 86.6L297.7 90.8zM287.8 39.2L287.9 44.5L282.2 41.3L276.5 42.7L274.5 37.8L274.4 33.8L275.1 29.9L278.6 26.5L283.9 30.3L286.8 33.1L290.6 36.3zM328.2 71.0L327.2 72.2L325.6 73.1L323.5 73.1L321.4 72.8L319.8 71.7L319.8 70.3L320.2 68.4L323.4 68.4L326.1 68.3L327.3 69.7zM413.7 114.3L412.4 117.2L411.4 120.2L410.2 119.4L408.1 120.7L407.8 116.0L408.9 112.0L409.7 107.9L411.5 103.9L412.5 108.7L414.5 109.1zM429.9 154.0L429.5 155.9L428.5 157.9L426.6 157.2L425.0 156.7L423.8 155.1L423.2 152.7L425.2 151.6L426.5 149.8L428.4 150.4L429.7 151.9zM477.9 222.3L476.2 224.1L474.8 224.1L473.6 224.0L473.5 222.6L472.8 220.8L475.0 218.9L476.6 217.8L477.8 217.9L480.2 217.1L480.0 219.7zM323.5 118.0L321.6 119.9L319.7 121.0L317.4 121.4L314.8 120.9L314.3 118.9L313.4 116.9L315.2 115.4L317.1 112.9L320.7 113.3L322.3 115.8zM270.5 26.0L271.3 29.5L269.1 30.0L267.6 30.5L266.7 28.6L265.3 27.3L265.2 24.6L266.0 22.2L267.7 22.0L269.3 21.4L269.7 24.2z" fill="#f40000"/><path d="M319.9 53.4L317.7 53.8L315.3 54.3L312.8 51.9L311.2 49.9L309.6 47.5L310.9 46.1L312.8 44.6L316.4 46.1L320.2 48.4L321.7 51.7zM330.0 61.2L328.7 62.8L326.1 62.0L324.3 61.1L321.6 60.0L323.1 58.1L322.6 56.0L324.7 55.5L326.7 57.0L329.4 57.1L330.7 59.2zM416.7 84.0L415.9 86.6L411.9 88.9L406.3 88.1L401.4 88.7L398.5 87.0L396.4 84.7L399.6 82.1L405.0 80.4L410.5 80.8L416.2 81.4zM379.5 92.0L378.8 94.1L376.4 94.6L374.6 94.4L373.0 94.0L371.5 92.9L372.1 91.3L371.8 88.8L374.4 88.4L376.8 88.6L378.6 90.0zM462.3 130.3L461.1 134.0L459.4 134.4L457.7 138.2L456.1 135.9L455.9 131.7L456.3 127.7L457.4 124.0L459.2 125.0L461.2 122.8L461.4 127.0zM446.5 141.0L446.5 142.6L445.7 144.7L443.6 143.8L441.4 144.1L439.6 142.3L440.7 140.0L441.9 138.6L443.5 137.6L445.6 137.4L447.4 138.8zM501.1 135.4L500.0 139.4L498.7 139.7L497.7 140.2L497.0 139.1L496.4 136.8L497.7 133.0L498.8 129.3L499.8 130.3L500.5 130.6L501.0 132.1zM508.2 154.4L507.4 156.8L506.1 158.2L505.1 157.3L504.1 156.7L503.9 154.7L504.4 152.5L505.5 151.6L506.6 149.1L507.2 151.3L508.7 151.7zM535.4 203.0L531.9 204.5L531.0 206.5L528.1 207.8L524.7 206.9L524.4 204.1L524.9 202.0L526.3 200.5L528.1 197.9L530.7 200.0L533.4 200.7zM522.1 213.0L522.4 214.6L521.1 216.5L518.6 215.3L515.8 215.7L515.1 213.8L514.2 211.9L516.0 210.4L518.5 210.5L521.1 209.6L522.3 211.4zM539.7 212.0L539.4 213.8L539.0 216.5L537.7 216.8L536.6 215.3L536.2 213.1L535.8 210.7L536.6 208.7L537.6 206.0L538.7 208.9L540.4 208.9zM305.4 64.0L304.3 65.6L304.1 68.6L302.7 68.5L301.4 67.8L301.3 65.0L301.2 63.0L301.8 61.2L302.6 58.8L303.9 60.2L304.5 62.0zM359.7 85.5L358.5 86.1L356.4 86.1L354.4 86.0L350.9 86.0L350.8 84.9L348.9 83.8L352.4 83.8L354.5 83.7L357.2 83.8L358.4 84.7zM421.8 95.0L422.2 98.5L421.0 100.7L419.7 100.9L418.6 99.1L417.6 96.8L417.5 93.2L418.6 91.1L419.7 89.4L420.6 91.8L421.9 91.9z" fill="#0e9de2"/><path d="M391.8 96.0L391.9 99.1L388.7 101.0L385.3 100.3L383.2 98.7L378.7 97.8L381.6 94.9L382.1 92.3L385.2 91.5L388.2 92.0L391.8 92.9zM409.8 100.0L406.3 101.6L404.7 103.5L401.3 103.0L397.9 102.7L396.6 100.9L397.5 99.2L398.9 97.9L401.3 97.2L405.1 96.0L407.0 98.1z" fill="#d6c96e"/><path d="M479 178L503 177 512.500 184 512.500 197 503 200 489 197 487 204 479 196z" fill="#0e9de2"/><path d="M492 180h4.500v8h-4.500z" fill="#d6c96e"/></g><g clip-path="url(#ecoclip)"><path d="M255.5 10.0L256.2 12.7L254.6 14.8L252.6 13.8L251.5 12.3L250.7 10.9L250.9 9.2L251.2 7.3L252.7 7.1L254.0 7.0L255.1 8.2zM259.1 18.0L259.1 20.0L258.0 21.2L256.7 20.8L255.8 20.1L255.1 18.9L255.2 17.2L255.8 16.0L256.8 15.9L257.7 15.7L259.2 15.9z" fill="#0e9de2"/><path d="M251.9 8.0L252.1 9.1L251.1 10.0L249.6 10.4L248.7 9.2L248.0 8.5L248.0 7.5L248.5 6.6L249.7 6.1L251.3 5.7L252.6 6.7zM258.5 13.0L257.2 13.9L256.6 14.6L255.7 15.8L254.4 15.4L254.1 13.7L254.0 12.3L255.1 11.7L255.7 10.7L257.1 10.1L258.0 11.4z" fill="#3aa70a"/><path d="M256.5 7.0L256.2 8.1L254.7 8.1L253.8 8.1L253.0 7.9L252.1 7.4L251.9 6.5L252.3 5.5L253.7 5.3L254.9 5.5L256.0 6.1z" fill="#d3ffbe"/><path d="M236 18l6 4 6 8 6 10" fill="none" stroke="#0e9de2" stroke-width="1.300"/><path d="M194 27l3-4 2 3-2 5z" fill="#d3ffbe"/></g><polygon points="252.5,24.0 254.0,37.2 260.5,49.5 266.6,63.2 268.0,74.1 262.5,79.6 259.1,87.8 262.5,96.0 268.0,105.6 277.6,112.4 288.5,117.9 295.4,123.4 299.5,122.0 292.6,115.2 281.7,108.3 274.8,100.1 274.2,90.5 274.8,79.6 274.8,68.6 271.4,56.3 266.3,44.0 262.5,33.0 263.0,22.0" fill="#0e9de2"/><ellipse cx="265.600" cy="86" rx="5" ry="7.500" fill="#c8f590" transform="rotate(15 265.600 86)"/><polyline points="266.6,15.5 283,24.2 299.5,34.4 315.9,45.4 332.3,56.3 348.7,64.5 365.2,71.4 378.8,76.2 392.5,79.600" fill="none" stroke="#3aa70a" stroke-width="1.8"/><g fill="none" stroke="#a86868" stroke-width=".7"><polyline points="170,56 172,78 174,104 178,112 176,119"/><polyline points="226,51 222,66 214,78 218,92 214,104 224,110 228,118"/><polyline points="216,77 244,78 262,78"/><polyline points="274,79 310,79 345,80"/></g><g fill="#0e9de2"><path d="M228 93l7 1-1 3-6 1zM240 112l5-1 1 3-5 1zM196 40l4 1-2 3z"/></g></g></defs><use href="#mp"/><g><rect x="318" y="143" width="46" height="22" fill="#eceae6"/><g font-family="Liberation Sans,sans-serif" font-size="5.600" fill="#9a9a9a" text-anchor="middle"><text x="341" y="150">Haikou Meilan</text><text x="341" y="157">International</text><text x="341" y="164">Airport</text></g><text x="94" y="156" font-size="9.5" font-family="Liberation Serif,serif" font-weight="bold" fill="#222">秀英区</text><text x="216" y="181" font-size="9.5" font-family="Liberation Serif,serif" font-weight="bold" fill="#222">龙华区</text><text x="301" y="207" font-size="9.5" font-family="Liberation Serif,serif" font-weight="bold" fill="#222">琼山区</text><text x="373" y="147" font-size="9.5" font-family="Liberation Serif,serif" font-weight="bold" fill="#222">美兰区</text><text x="580" y="135" font-size="9.5" font-family="Liberation Serif,serif" font-weight="bold" fill="#222">文昌市</text><text x="4" y="220" font-size="9.5" font-family="Liberation Serif,serif" font-weight="bold" fill="#222">澄迈县</text><g><text x="683" y="25" font-family="Liberation Sans,sans-serif" font-size="13" fill="#000">N</text><path d="M689 30l-11 36 11-9z" fill="#000"/><path d="M689 30l11 36-11-9z" fill="none" stroke="#000" stroke-width="1"/></g><text x="629" y="250" font-family="Liberation Sans,sans-serif" font-size="6.200" fill="#555">Esri, NASA, NGA, USGS</text></g><g transform="translate(0,261)"><use href="#mp"/><rect x="318" y="141" width="46" height="22" fill="#eceae6"/><g font-family="Liberation Sans,sans-serif" font-size="5.600" fill="#9a9a9a" text-anchor="middle"><text x="341" y="150">Haikou Meilan</text><text x="341" y="157">International</text><text x="341" y="164">Airport</text></g><text x="92" y="153" font-size="9.5" font-family="Liberation Serif,serif" font-weight="bold" fill="#222">秀英区</text><text x="208" y="177" font-size="9.5" font-family="Liberation Serif,serif" font-weight="bold" fill="#222">龙华区</text><text x="303" y="196" font-size="9.5" font-family="Liberation Serif,serif" font-weight="bold" fill="#222">琼山区</text><text x="365" y="138" font-size="9.5" font-family="Liberation Serif,serif" font-weight="bold" fill="#222">美兰区</text><text x="578" y="132" font-size="9.5" font-family="Liberation Serif,serif" font-weight="bold" fill="#222">文昌市</text><text x="4" y="161" font-size="9.5" font-family="Liberation Serif,serif" font-weight="bold" fill="#222">澄迈县</text><rect x="628.500" y="120" width="80.500" height="140" fill="#fff"/><text x="629" y="131" font-size="10" fill="#000" font-family="Liberation Sans,sans-serif">生态系统类型</text><rect x="629" y="139.5" width="13" height="8" fill="#38a800"/><text x="646" y="147.5" font-size="10" fill="#000" font-family="Liberation Sans,sans-serif">森林生态系统</text><rect x="629" y="155.8" width="13" height="8" fill="#98cf38"/><text x="646" y="163.8" font-size="10" fill="#000" font-family="Liberation Sans,sans-serif">灌丛生态系统</text><rect x="629" y="172.1" width="13" height="8" fill="#d3ffbe"/><text x="646" y="180.1" font-size="10" fill="#000" font-family="Liberation Sans,sans-serif">草地生态系统</text><rect x="629" y="188.4" width="13" height="8" fill="#0e9de2"/><text x="646" y="196.4" font-size="10" fill="#000" font-family="Liberation Sans,sans-serif">湿地生态系统</text><rect x="629" y="204.7" width="13" height="8" fill="#d6c96e"/><text x="646" y="212.7" font-size="10" fill="#000" font-family="Liberation Sans,sans-serif">农田生态系统</text><rect x="629" y="221.0" width="13" height="8" fill="#f40000"/><text x="646" y="229.0" font-size="10" fill="#000" font-family="Liberation Sans,sans-serif">城镇生态系统</text><rect x="629" y="237.3" width="13" height="8" fill="#e69800"/><text x="646" y="245.3" font-size="10" fill="#000" font-family="Liberation Sans,sans-serif">其他</text><g font-family="Liberation Sans,sans-serif" font-size="8.500" fill="#000"><rect x="20" y="237.500" width="173.500" height="5" fill="#000"/><rect x="31" y="238.500" width="10" height="3" fill="#fff"/><rect x="52.5" y="238.500" width="10.5" height="3" fill="#fff"/><rect x="106.5" y="238.500" width="43.5" height="3" fill="#fff"/><text x="18" y="234">0</text><text x="33" y="234">2.5</text><text x="60" y="234">5</text><text x="101" y="234">10</text><text x="144" y="234">15</text><text x="187" y="234">20</text><text x="195" y="244">km</text></g></g><rect x="0" y="260" width="719" height="1.300" fill="#222"/></svg>
<!-- ===== right panel ===== -->
<div class="a" style="left:1379px;top:259px;width:448px;height:1050px;background:#333333;border:1px solid #2a8fe6;border-radius:7px"></div>
<div class="t" style="left:1389px;top:271px;font-size:24px;line-height:26px;height:26px;color:#2a8fe6">导出布局</div>
<svg class="ic" style="left:1746px;top:272px;stroke:#c4c4c4" width="76" height="20"><path d="M4 8l5.500 5.500 5.500-5.500"/><path d="M32 3h6v8h-6zM30 11h10M35 11v6" stroke-width="1.400"/><path d="M55 3l13 13M68 3L55 16" stroke-width="1.800"/></svg>
<div class="t c" style="left:1554px;top:301px;width:100px;font-size:21px;line-height:22px;height:22px;color:#d8d8d8">布局<span style="font-size:22px">2</span></div>
<div class="t" style="left:1390px;top:354px;font-size:20.500px;line-height:22px;height:22px;color:#d8d8d8">属性</div>
<svg class="ic" style="left:1394px;top:419px;stroke:#c4c4c4;stroke-width:2" width="14" height="12"><path d="M2.500 3l4.500 4.500 4.500-4.500"/></svg>
<div class="t b" style="left:1415px;top:414px;font-size:19px;color:#e4e4e4">文件</div>
<div class="t" style="left:1403px;top:458px;color:#d4d4d4;">文件类型</div>
<div class="a" style="left:1402px;top:486px;width:180px;height:41px;background:#1e1e1e;border:1px solid #7a7a7a;border-radius:5px"></div>
<div class="t" style="left:1415px;top:496px;color:#f0f0f0;"><span class="m">JPEG</span></div>
<svg class="ic" style="left:1560px;top:502px;stroke:#e8e8e8;stroke-width:2" width="16" height="12"><path d="M3 3l5 5 5-5"/></svg>
<div class="t" style="left:1403px;top:535px;color:#d4d4d4;">名称</div>
<div class="a" style="left:1402px;top:563px;width:366px;height:30px;background:#1e1e1e;border:1px solid #5c5c5c"></div>
<div class="t" style="left:1410px;top:568px;width:356px;overflow:hidden;color:#f0f0f0;letter-spacing:0"><span class="m">E:\b2_</span>环科院工作<span class="m">2025</span>年<span class="m">\b</span>项目<span class="m">\d</span>第五次海南</div>
<svg style="left:1778px;top:568px" width="28" height="22"><path d="M1 3h8l2 2h10v4h-20z" fill="#b99f2c"/><path d="M4.500 8h21l-4 11h-20.500z" fill="#d9c244"/></svg>
<div class="a" style="left:1402px;top:602px;width:21px;height:21px;background:#222;border:1px solid #7a7a7a;border-radius:4px"></div>
<div class="t" style="left:1433px;top:602px;color:#d4d4d4;">裁剪至图形范围</div>
<div class="a" style="left:1402px;top:632px;width:21px;height:21px;background:#222;border:1px solid #7a7a7a;border-radius:4px"></div>
<div class="t" style="left:1433px;top:632px;color:#d4d4d4;">显示所选内容的符号系统</div>
<svg class="ic" style="left:1394px;top:688px;stroke:#c4c4c4;stroke-width:2" width="14" height="12"><path d="M2.500 3l4.500 4.500 4.500-4.500"/></svg>
<div class="t b" style="left:1415px;top:683px;font-size:19px;color:#e4e4e4">压缩</div>
<div class="t" style="left:1403px;top:727px;color:#d4d4d4;">质量</div>
<div class="t" style="left:1403px;top:753px;color:#d4d4d4;">低</div>
<div class="a" style="left:1429px;top:762px;width:250px;height:4px;background:#686868"></div><div class="a" style="left:1679px;top:762px;width:64px;height:4px;background:#474747"></div><div class="a" style="left:1676px;top:756px;width:4px;height:16px;background:#8a8a8a"></div>
<div class="t" style="left:1753px;top:753px;color:#d4d4d4;">最大值</div>
<svg class="ic" style="left:1394px;top:820px;stroke:#c4c4c4;stroke-width:2" width="14" height="12"><path d="M2.500 3l4.500 4.500 4.500-4.500"/></svg>
<div class="t b" style="left:1415px;top:815px;font-size:19px;color:#e4e4e4">分辨率</div>
<div class="a" style="left:1402px;top:859px;width:75px;height:30px;background:#1e1e1e;border:1px solid #707070"></div>
<div class="t" style="left:1419px;top:864px;color:#f0f0f0;"><span class="m">300</span></div>
<svg class="ic" style="left:1455px;top:861px;stroke:#c4c4c4;stroke-width:1.600" width="16" height="26"><path d="M3 9l5-5 5 5M3 17l5 5 5-5"/></svg>
<div class="t" style="left:1483px;top:864px;color:#d4d4d4;"><span class="m">DPI</span></div>
<div class="t" style="left:1403px;top:896px;color:#d4d4d4;">高度<span class="m">: 2480 </span>宽度<span class="m">: 3508</span></div>
<svg class="ic" style="left:1394px;top:950px;stroke:#c4c4c4;stroke-width:2" width="14" height="12"><path d="M2.500 3l4.500 4.500 4.500-4.500"/></svg>
<div class="t b" style="left:1415px;top:945px;font-size:19px;color:#e4e4e4"><span style="font-family:'Liberation Serif',serif;font-size:20px">JPEG</span> 设置</div>
<div class="a" style="left:1402px;top:998px;width:21px;height:21px;background:#222;border:1px solid #7a7a7a;border-radius:4px"></div>
<div class="t" style="left:1433px;top:998px;color:#d4d4d4;">写入坐标文件</div>
<div class="t" style="left:1403px;top:1031px;color:#d4d4d4;">地图框</div>
<div class="a" style="left:1546px;top:1025px;width:260px;height:33px;background:#3a3a3a;border:1px solid #6e6e6e;border-radius:6px"></div>
<svg style="left:1553px;top:1031px" width="23" height="22"><rect width="22" height="21" fill="#4c9a4c"/><path d="M16 0h4v11l-3 3-3 1-2 3-4 0 0-3 2-2-1-3 3-2 2-4 2-1z" fill="#1f65a5"/></svg>
<div class="t" style="left:1585px;top:1032px;color:#e4e4e4;">地图框</div>
<svg class="ic" style="left:1783px;top:1038px;stroke:#c4c4c4;stroke-width:2" width="16" height="12"><path d="M3 3l5 5 5-5"/></svg>
<div class="t" style="left:1403px;top:1075px;color:#d4d4d4;">颜色深度</div>
<div class="a" style="left:1546px;top:1064px;width:180px;height:42px;background:#1e1e1e;border:1px solid #7a7a7a;border-radius:5px"></div>
<div class="t" style="left:1558px;top:1075px;color:#f0f0f0;"><span class="m">24 </span>位真彩色</div>
<svg class="ic" style="left:1703px;top:1081px;stroke:#e8e8e8;stroke-width:2" width="16" height="12"><path d="M3 3l5 5 5-5"/></svg>
<div class="a" style="left:1580px;top:1258px;width:105px;height:36px;background:#222;border:2px solid #d8d8d8;border-radius:6px"></div>
<div class="t c" style="left:1580px;top:1266px;width:105px;color:#e0e0e0">保存预设</div>
<div class="a" style="left:1700px;top:1258px;width:105px;height:36px;background:#222;border:2px solid #d8d8d8;border-radius:6px"></div>
<div class="t c" style="left:1700px;top:1266px;width:105px;color:#e0e0e0">导出</div>
<div class="a" style="left:1464px;top:1296px;width:363px;height:3px;background:#f0f0f0;border-radius:3px 0 0 0"></div>
<!-- ===== popup ===== -->
<div class="a" style="left:834px;top:219px;width:479px;height:312px;background:#1f1f1f;border:2px solid #5a5a5a;box-shadow:0 6px 14px 2px rgba(0,0,0,.65)"></div>
<div class="t" style="left:1240px;top:227px;color:#f0f0f0">全部</div>
<svg class="ic" style="left:1281px;top:232px;stroke:#f0f0f0;stroke-width:1.800" width="16" height="14"><path d="M3 4l5 5 5-5"/></svg>
<div class="a" style="left:837px;top:258px;width:473px;height:2px;background:#5a5a5a"></div>
<div class="t b" style="left:860px;top:268px;color:#f5f5f5;font-size:18px">导出预设</div>
<svg style="left:0;top:0" width="1827" height="600">
<g transform="translate(896.3,296.6)"><path d="M.6 .6h27l11 11v35.400h-38z" fill="#333" stroke="#9a9a9a" stroke-width="1.300"/><path d="M27.600 .6v11h11" fill="none" stroke="#9a9a9a" stroke-width="1.300"/><rect x="-4.400" y="2.800" width="18.600" height="18.400" fill="#2e2e2e" stroke="#9a9a9a" stroke-width="1.300"/><rect x="-1.500" y="5.500" width="12.800" height="9" fill="#2f8fd8"/><path d="M1 12l3-3 2 1 3-4 1 3v4h-9z" fill="#1c5f9a"/><path d="M-1.500 17.500h8" stroke="#9a9a9a" stroke-width="1.200"/><rect x="9.500" y="16.800" width="1.800" height="1.500" fill="#2f8fd8"/><text x="-4.5" y="40.500" font-family="Liberation Sans,sans-serif" font-size="18.500" stroke-width=".45" paint-order="stroke" fill="#6ab8ee" stroke="#6ab8ee" textLength="37" lengthAdjust="spacingAndGlyphs">TIFF</text></g><g transform="translate(1046.7,296.6)"><path d="M.6 .6h27l11 11v35.400h-38z" fill="#333" stroke="#9a9a9a" stroke-width="1.300"/><path d="M27.600 .6v11h11" fill="none" stroke="#9a9a9a" stroke-width="1.300"/><rect x="-4.400" y="2.800" width="18.600" height="18.400" fill="#2e2e2e" stroke="#9a9a9a" stroke-width="1.300"/><rect x="-1.500" y="5.500" width="12.800" height="9" fill="#2f8fd8"/><path d="M1 12l3-3 2 1 3-4 1 3v4h-9z" fill="#1c5f9a"/><path d="M-1.500 17.500h8" stroke="#9a9a9a" stroke-width="1.200"/><rect x="9.500" y="16.800" width="1.800" height="1.500" fill="#2f8fd8"/><text x="-4.5" y="40.500" font-family="Liberation Sans,sans-serif" font-size="18.500" stroke-width=".45" paint-order="stroke" fill="#6ab8ee" stroke="#6ab8ee" textLength="37" lengthAdjust="spacingAndGlyphs">JPEG</text></g><g transform="translate(1197.2,296.6)"><path d="M.6 .6h27l11 11v35.400h-38z" fill="#333" stroke="#9a9a9a" stroke-width="1.300"/><path d="M27.600 .6v11h11" fill="none" stroke="#9a9a9a" stroke-width="1.300"/><rect x="-4.400" y="2.800" width="18.600" height="18.400" fill="#2e2e2e" stroke="#9a9a9a" stroke-width="1.300"/><rect x="-1.500" y="5.500" width="12.800" height="9" fill="#2f8fd8"/><path d="M1 12l3-3 2 1 3-4 1 3v4h-9z" fill="#1c5f9a"/><path d="M-1.500 17.500h8" stroke="#9a9a9a" stroke-width="1.200"/><rect x="9.500" y="16.800" width="1.800" height="1.500" fill="#2f8fd8"/><text x="-4.5" y="40.500" font-family="Liberation Sans,sans-serif" font-size="18.500" stroke-width=".45" paint-order="stroke" fill="#d9602c" stroke="#d9602c" textLength="27.5" lengthAdjust="spacingAndGlyphs">PDF</text></g>
<g transform="translate(896.3,386.6)"><path d="M.6 .6h27l11 11v35.400h-38z" fill="#333" stroke="#9a9a9a" stroke-width="1.300"/><path d="M27.600 .6v11h11" fill="none" stroke="#9a9a9a" stroke-width="1.300"/><rect x="-4.400" y="2.800" width="18.600" height="18.400" fill="#2e2e2e" stroke="#9a9a9a" stroke-width="1.300"/><rect x="-1.500" y="5.500" width="12.800" height="9" fill="#2f8fd8"/><path d="M1 12l3-3 2 1 3-4 1 3v4h-9z" fill="#1c5f9a"/><path d="M-1.500 17.500h8" stroke="#9a9a9a" stroke-width="1.200"/><rect x="9.500" y="16.800" width="1.800" height="1.500" fill="#2f8fd8"/><text x="-4.5" y="40.500" font-family="Liberation Sans,sans-serif" font-size="18.500" stroke-width=".45" paint-order="stroke" fill="#6ab8ee" stroke="#6ab8ee" textLength="27.5" lengthAdjust="spacingAndGlyphs">AIX</text></g><g transform="translate(1046.7,386.6)"><path d="M.6 .6h27l11 11v35.400h-38z" fill="#333" stroke="#9a9a9a" stroke-width="1.300"/><path d="M27.600 .6v11h11" fill="none" stroke="#9a9a9a" stroke-width="1.300"/><rect x="-4.400" y="2.800" width="18.600" height="18.400" fill="#2e2e2e" stroke="#9a9a9a" stroke-width="1.300"/><rect x="-1.500" y="5.500" width="12.800" height="9" fill="#2f8fd8"/><path d="M1 12l3-3 2 1 3-4 1 3v4h-9z" fill="#1c5f9a"/><path d="M-1.500 17.500h8" stroke="#9a9a9a" stroke-width="1.200"/><rect x="9.500" y="16.800" width="1.800" height="1.500" fill="#2f8fd8"/><text x="-4.5" y="40.500" font-family="Liberation Sans,sans-serif" font-size="18.500" stroke-width=".45" paint-order="stroke" fill="#d9602c" stroke="#d9602c" textLength="27.5" lengthAdjust="spacingAndGlyphs">PDF</text></g><g transform="translate(1197.2,386.6)"><path d="M.6 .6h27l11 11v35.400h-38z" fill="#333" stroke="#9a9a9a" stroke-width="1.300"/><path d="M27.600 .6v11h11" fill="none" stroke="#9a9a9a" stroke-width="1.300"/><rect x="-4.400" y="2.800" width="18.600" height="18.400" fill="#2e2e2e" stroke="#9a9a9a" stroke-width="1.300"/><rect x="-1.500" y="5.500" width="12.800" height="9" fill="#2f8fd8"/><path d="M1 12l3-3 2 1 3-4 1 3v4h-9z" fill="#1c5f9a"/><path d="M-1.500 17.500h8" stroke="#9a9a9a" stroke-width="1.200"/><rect x="9.500" y="16.800" width="1.800" height="1.500" fill="#2f8fd8"/><text x="-4.5" y="40.500" font-family="Liberation Sans,sans-serif" font-size="18.500" stroke-width=".45" paint-order="stroke" fill="#d9602c" stroke="#d9602c" textLength="27.5" lengthAdjust="spacingAndGlyphs">PDF</text></g>
<g transform="translate(847,499)"><path d="M1 6h8l2 2h11v4h-21z" fill="#b99f2c"/><path d="M4 11h21l-3.500 12h-21z" fill="#d9c244"/><path d="M14 7c1-5 5-6 9-5M20 -1l4 3-4 3" fill="none" stroke="#4a9fe0" stroke-width="1.800"/></g>
</svg>
<div class="t c" style="left:832.0px;top:344px;width:160px;color:#e8e8e8"><span class="m">GeoTIFF</span></div>
<div class="t c" style="left:983.0px;top:344px;width:160px;color:#e8e8e8"><span class="m">Web JPEG</span></div>
<div class="t c" style="left:1133.0px;top:344px;width:160px;color:#e8e8e8">扁平化 <span class="m">PDF</span></div>
<div class="t c" style="left:833.0px;top:434px;width:160px;color:#e8e8e8">默认 <span class="m">AIX</span></div>
<div class="t c" style="left:983.0px;top:434px;width:160px;color:#e8e8e8">矢量 <span class="m">PDF</span></div>
<div class="t c" style="left:1133.0px;top:434px;width:160px;color:#e8e8e8">已地理配准 <span class="m">PDF</span></div>
<div class="a" style="left:837px;top:489px;width:473px;height:2px;background:#5a5a5a"></div>
<div class="t" style="left:886px;top:500px;color:#e8e8e8">打开预设 <span class="m">(0)</span></div>
<!-- ===== arrows ===== -->
<svg style="left:0;top:0" width="1827" height="400" fill="#f21b12">
<path d="M196.0 84.4L828.8 135.5L821.3 141.7L841.0 132.7L822.8 120.8L829.3 128.1L196.0 83.6z"/>
<path d="M927.7 192.3L1021.1 297.7L1010.7 296.4L1032.3 305.0L1025.4 282.8L1025.9 293.2L928.3 191.7z"/>
</svg>
</body></html>
